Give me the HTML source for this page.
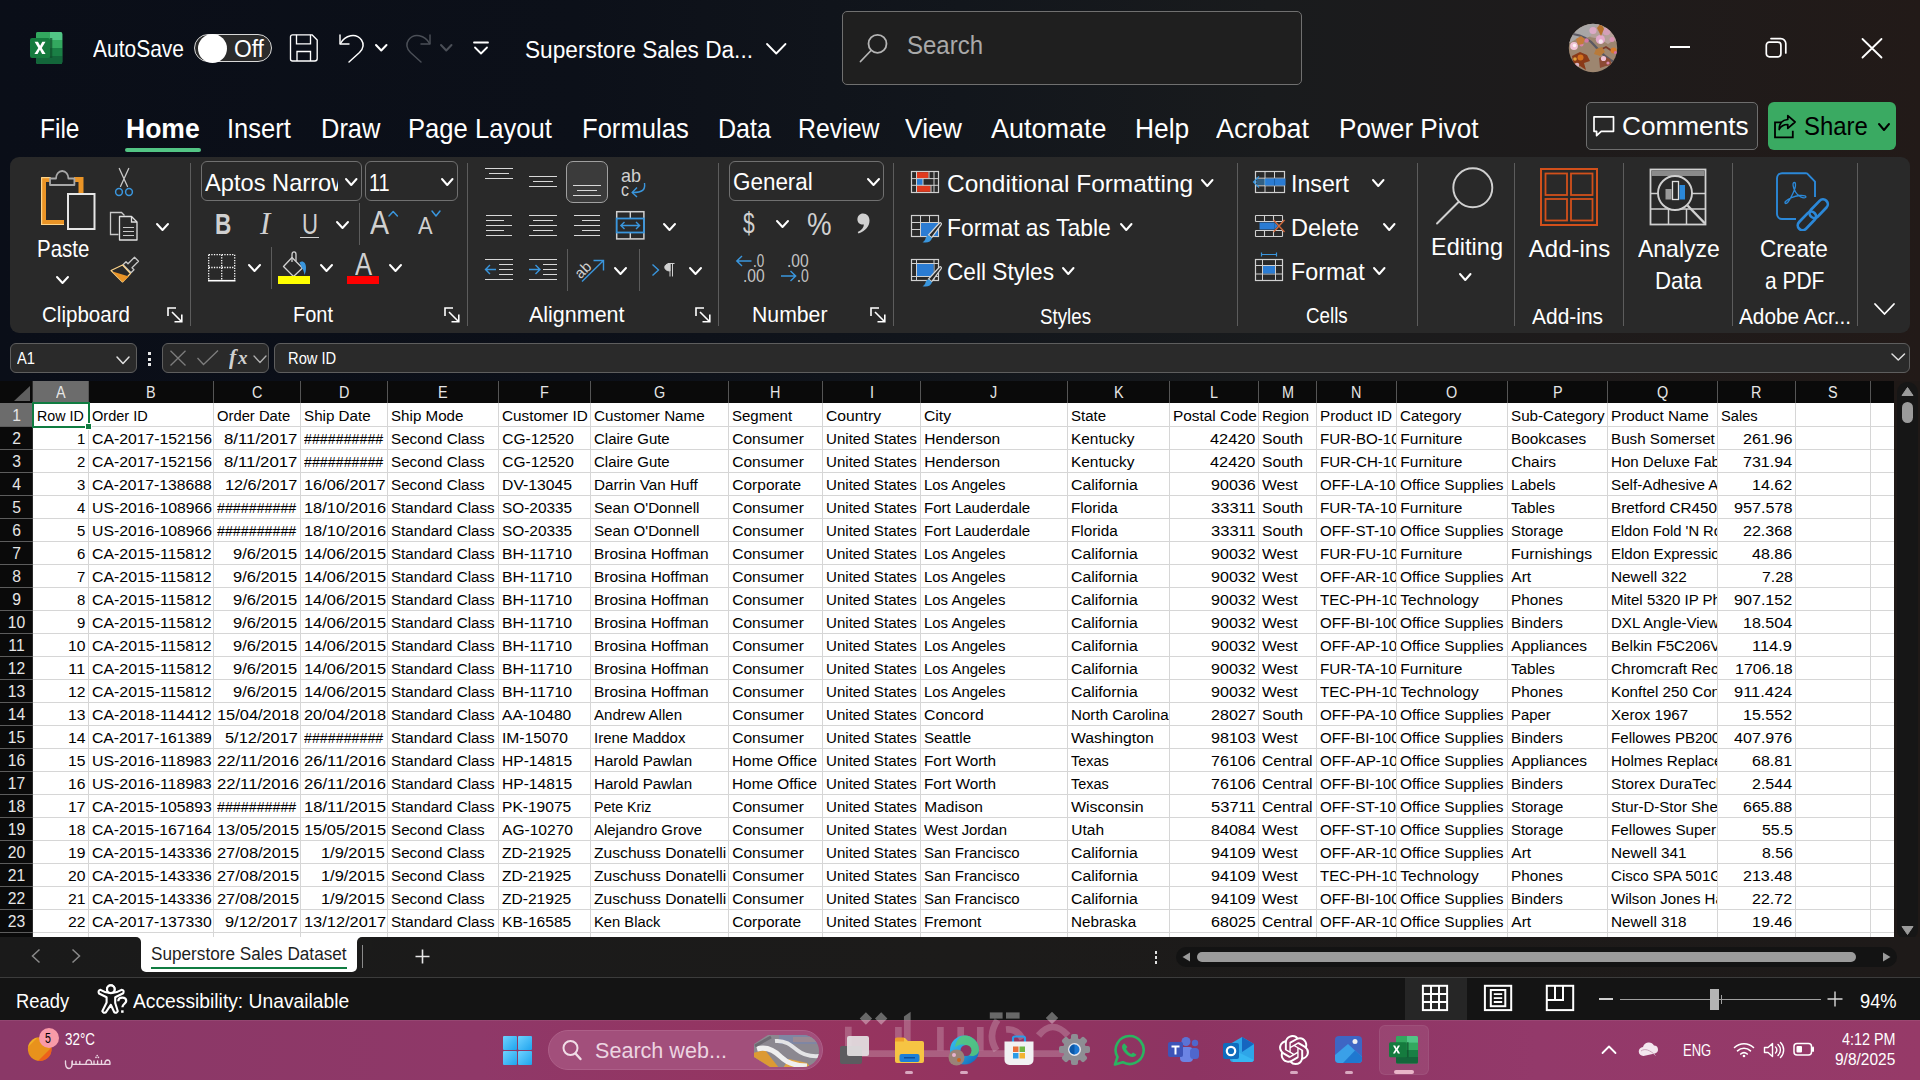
<!DOCTYPE html>
<html><head><meta charset="utf-8"><title>Excel</title><style>
html,body{margin:0;padding:0}
body{width:1920px;height:1080px;overflow:hidden;position:relative;background:#0b0f19;font-family:"Liberation Sans",sans-serif;}
.b{position:absolute;box-sizing:border-box}
.t{position:absolute;white-space:pre;transform-origin:0 0}
.c{position:absolute;overflow:hidden}
</style></head><body>
<div class="b" style="left:0px;top:0px;width:1920px;height:1020px;background:linear-gradient(90deg,#0a0e18 0%,#0c1019 30%,#12161c 50%,#191b1d 66%,#1e1b1b 82%,#221a18 100%);"></div>
<svg class="b" style="left:30px;top:32px;" width="33" height="33" viewBox="0 0 33 33"><defs><clipPath id="xb"><rect x="6" y="0" width="26.300" height="32" rx="2"/></clipPath></defs>
<g clip-path="url(#xb)"><rect x="6" y="0" width="27" height="32" fill="#2f9f5b"/>
<rect x="6" y="0" width="14" height="8" fill="#33a85f"/><rect x="20" y="0" width="13" height="8" fill="#52c586"/>
<rect x="6" y="8" width="27" height="8" fill="#33a85f"/><rect x="6" y="16" width="27" height="8" fill="#1a7f45"/>
<rect x="6" y="24" width="27" height="8" fill="#13663a"/><rect x="20" y="6" width="2.300" height="20" fill="#0f4d2b" opacity=".7"/></g>
<rect x="0" y="6" width="20" height="20" rx="2" fill="#157b3e"/>
<path d="M4.600 9.800h3.400l2.100 4 2.200-4h3.200l-3.700 6.100 3.800 6.100h-3.500l-2.200-4.200-2.300 4.200H4.400l3.900-6.100z" fill="#fff"/></svg>
<span class="t" style="left:93.00px;top:38px;font-size:23.2px;line-height:23.2px;color:#ffffff;transform:scaleX(0.9046);">AutoSave</span>
<div class="b" style="left:194px;top:34px;width:78px;height:28px;background:#2b2b2b;border:1.5px solid #d8d8d8;border-radius:14px;"></div>
<div class="b" style="left:198px;top:33.5px;width:29px;height:29px;background:#ffffff;border-radius:15px;"></div>
<span class="t" style="left:234.00px;top:38px;font-size:23px;line-height:23px;color:#ffffff;transform:scaleX(0.9896);">Off</span>
<svg class="b" style="left:289px;top:33px;" width="30" height="30" viewBox="0 0 30 30"><path d="M3.500 1.800h19.500l5.200 5.200v18.500a2.500 2.500 0 0 1-2.500 2.500H3.500a2 2 0 0 1-2-2V3.800a2 2 0 0 1 2-2z" fill="none" stroke="#fff" stroke-width="1.350" stroke-linejoin="round"/>
<path d="M7.500 1.800v9h14v-9" fill="none" stroke="#fff" stroke-width="1.350"/><path d="M8 28V18.500h13.500V28" fill="none" stroke="#fff" stroke-width="1.350"/></svg>
<svg class="b" style="left:336px;top:31px;" width="32" height="34" viewBox="0 0 32 34"><path d="M4 4v9h9" fill="none" stroke="#fff" stroke-width="1.450" stroke-linecap="round" stroke-linejoin="round"/>
<path d="M4.5 12.5C9 4 20 1.5 25.5 9c3 4.5 1.5 9-2 12.5L13 31" fill="none" stroke="#fff" stroke-width="1.450" stroke-linecap="round" stroke-linejoin="round"/></svg>
<svg class="b" style="left:373.75px;top:42.75px;" width="14.5" height="9.5" viewBox="0 0 14.5 9.5"><path d="M2 2 L7.25 7.5 L12.5 2" fill="none" stroke="#ffffff" stroke-width="2" stroke-linecap="round" stroke-linejoin="round"/></svg>
<svg class="b" style="left:402px;top:31px;" width="32" height="34" viewBox="0 0 32 34"><path d="M28 4v9h-9" fill="none" stroke="#4b4f57" stroke-width="1.450" stroke-linecap="round" stroke-linejoin="round"/>
<path d="M27.5 12.5C23 4 12 1.5 6.5 9c-3 4.5-1.5 9 2 12.5L19 31" fill="none" stroke="#4b4f57" stroke-width="1.450" stroke-linecap="round" stroke-linejoin="round"/></svg>
<svg class="b" style="left:439.45px;top:42.75px;" width="14.5" height="9.5" viewBox="0 0 14.5 9.5"><path d="M2 2 L7.25 7.5 L12.5 2" fill="none" stroke="#4b4f57" stroke-width="2" stroke-linecap="round" stroke-linejoin="round"/></svg>
<svg class="b" style="left:472px;top:40px;" width="18" height="16" viewBox="0 0 18 16"><path d="M2 2.5h14" stroke="#fff" stroke-width="1.8" stroke-linecap="round"/><path d="M3 7.5l6 6 6-6" fill="none" stroke="#fff" stroke-width="1.8" stroke-linecap="round" stroke-linejoin="round"/></svg>
<span class="t" style="left:524.50px;top:39px;font-size:23.5px;line-height:23.5px;color:#ffffff;transform:scaleX(0.9643);">Superstore Sales Da...</span>
<svg class="b" style="left:764.75px;top:41.95px;" width="22.5" height="13.5" viewBox="0 0 22.5 13.5"><path d="M2 2 L11.25 11.5 L20.5 2" fill="none" stroke="#ffffff" stroke-width="1.8" stroke-linecap="round" stroke-linejoin="round"/></svg>
<div class="b" style="left:842px;top:11px;width:460px;height:74px;background:#1f1f1f;border:1px solid #707070;border-radius:5px;"></div>
<svg class="b" style="left:856px;top:30px;" width="36" height="36" viewBox="0 0 36 36"><circle cx="21.5" cy="13.8" r="9" fill="none" stroke="#b4b4b4" stroke-width="1.8"/><path d="M15 20.5L4.5 31.5" stroke="#b4b4b4" stroke-width="1.8" stroke-linecap="round"/></svg>
<span class="t" style="left:907.00px;top:32px;font-size:26.5px;line-height:26.5px;color:#a9a9a9;transform:scaleX(0.9053);">Search</span>
<svg class="b" style="left:1568px;top:23px;" width="50" height="50" viewBox="0 0 50 50"><defs><clipPath id="av"><circle cx="25" cy="25" r="24.200"/></clipPath></defs>
<g clip-path="url(#av)"><rect width="50" height="50" fill="#9d8670"/>
<path d="M0 0h34l-2 6-6 6-8 3-8 0-10 6z" fill="#a8a6a6"/><path d="M22 14l10 2 8 5 6-4 4 4V10L40 0H30z" fill="#b5a09a"/>
<path d="M5 11q14 2 22 12t22 18" fill="none" stroke="#5b5862" stroke-width="2.200"/><path d="M30 28l8-4 6 4" fill="none" stroke="#7a3b2a" stroke-width="1.800"/>
<circle cx="32.400" cy="16.500" r="4.600" fill="#e3a9cb"/><circle cx="32.800" cy="18.500" r="2.200" fill="#f6e6ee"/>
<circle cx="25" cy="7.500" r="3.600" fill="#dcaac6"/><circle cx="38.500" cy="8.500" r="3.800" fill="#d3a0b8"/><circle cx="44" cy="16.500" r="2.500" fill="#d995b5"/>
<circle cx="6" cy="23" r="3.900" fill="#f1c3d5"/><circle cx="6.500" cy="22.500" r="1.800" fill="#fdf0f3"/>
<circle cx="18.500" cy="17.500" r="2.300" fill="#d07aa6"/><circle cx="13.500" cy="21.500" r="2" fill="#d982aa"/>
<path d="M8 16l5-3 4 3-2 5-5 1z" fill="#c57c3a"/><path d="M29 5l4-5 3 6-3 7z" fill="#b5702a"/>
<path d="M4 33l8-4 7 3 3 6-6 2 2 7-6-4-6 1z" fill="#8a3a18"/><circle cx="12.500" cy="34.500" r="3" fill="#d2701c"/><circle cx="7" cy="36" r="1.800" fill="#e2a13a"/>
<path d="M28 26l6-2 3 5-5 4-6-2z" fill="#b87a3a"/><circle cx="45.500" cy="27.500" r="3" fill="#d77a2a"/><circle cx="47.500" cy="29.500" r="1.600" fill="#d56fa5"/>
<path d="M31 35l5-2 6 3 2 6-6 1-6 2z" fill="#8c4a34"/><circle cx="35.500" cy="35.500" r="2.600" fill="#efc2d6"/><circle cx="40" cy="40" r="1.600" fill="#d98ab0"/>
<circle cx="9" cy="42" r="2.300" fill="#d8b4c0"/></g></svg>
<div class="b" style="left:1670px;top:46px;width:20px;height:2px;background:#fff;"></div>
<svg class="b" style="left:1763px;top:35px;" width="26" height="26" viewBox="0 0 26 26"><rect x="3.3" y="7.2" width="14.6" height="14.6" rx="3" fill="none" stroke="#fff" stroke-width="1.7"/>
<path d="M8 3.6h9.8a5 5 0 0 1 5 5V18" fill="none" stroke="#fff" stroke-width="1.7" stroke-linecap="round"/></svg>
<svg class="b" style="left:1860px;top:36px;" width="24" height="24" viewBox="0 0 24 24"><path d="M2.5 3L21.5 21.5M21.5 3L2.5 21.5" stroke="#fff" stroke-width="1.8" stroke-linecap="round"/></svg>
<span class="t" style="left:40.00px;top:115px;font-size:27.2px;line-height:27.2px;color:#ffffff;transform:scaleX(0.9014);">File</span>
<span class="t" style="left:227.00px;top:115px;font-size:27.2px;line-height:27.2px;color:#ffffff;transform:scaleX(0.9371);">Insert</span>
<span class="t" style="left:320.50px;top:115px;font-size:27.2px;line-height:27.2px;color:#ffffff;transform:scaleX(0.9364);">Draw</span>
<span class="t" style="left:408.00px;top:115px;font-size:27.2px;line-height:27.2px;color:#ffffff;transform:scaleX(0.9427);">Page Layout</span>
<span class="t" style="left:582.00px;top:115px;font-size:27.2px;line-height:27.2px;color:#ffffff;transform:scaleX(0.9416);">Formulas</span>
<span class="t" style="left:717.50px;top:115px;font-size:27.2px;line-height:27.2px;color:#ffffff;transform:scaleX(0.9222);">Data</span>
<span class="t" style="left:798.00px;top:115px;font-size:27.2px;line-height:27.2px;color:#ffffff;transform:scaleX(0.9130);">Review</span>
<span class="t" style="left:905.00px;top:115px;font-size:27.2px;line-height:27.2px;color:#ffffff;transform:scaleX(0.9738);">View</span>
<span class="t" style="left:990.75px;top:115px;font-size:27.2px;line-height:27.2px;color:#ffffff;transform:scaleX(0.9921);">Automate</span>
<span class="t" style="left:1135.00px;top:115px;font-size:27.2px;line-height:27.2px;color:#ffffff;transform:scaleX(0.9696);">Help</span>
<span class="t" style="left:1216.25px;top:115px;font-size:27.2px;line-height:27.2px;color:#ffffff;transform:scaleX(0.9922);">Acrobat</span>
<span class="t" style="left:1338.75px;top:115px;font-size:27.2px;line-height:27.2px;color:#ffffff;transform:scaleX(0.9613);">Power Pivot</span>
<span class="t" style="left:125.75px;top:115px;font-size:27.2px;line-height:27.2px;color:#ffffff;font-weight:700;transform:scaleX(0.9760);">Home</span>
<div class="b" style="left:125px;top:148px;width:76px;height:4px;background:#53c585;border-radius:2px;"></div>
<div class="b" style="left:1586px;top:102px;width:172px;height:48px;background:#282828;border:1px solid #6e6e6e;border-radius:5px;"></div>
<svg class="b" style="left:1591px;top:114px;" width="26" height="24" viewBox="0 0 26 24"><path d="M3 2.8h19.5v14.5H10.2L5.6 21.6v-4.3H3z" fill="none" stroke="#fff" stroke-width="1.7" stroke-linejoin="round"/></svg>
<span class="t" style="left:1622.00px;top:113px;font-size:26.2px;line-height:26.2px;color:#ffffff;">Comments</span>
<div class="b" style="left:1768px;top:102px;width:128px;height:48px;background:#3aaa62;border-radius:6px;"></div>
<svg class="b" style="left:1772px;top:113px;" width="26" height="27" viewBox="0 0 26 27"><path d="M9.5 9.3H3v15h17.8v-6.5" fill="none" stroke="#000" stroke-width="1.8"/>
<path d="M15.8 2.6l7.3 6.4-7.3 6.4v-3.9c-4.6 0-7 1.7-8.6 5 0-5.6 3-9.6 8.6-10z" fill="none" stroke="#000" stroke-width="1.7" stroke-linejoin="round"/></svg>
<span class="t" style="left:1804.10px;top:113px;font-size:26.2px;line-height:26.2px;color:#000;transform:scaleX(0.9127);">Share</span>
<svg class="b" style="left:1877.3px;top:121.6px;" width="14" height="10" viewBox="0 0 14 10"><path d="M2 2 L7.0 8 L12 2" fill="none" stroke="#000" stroke-width="2" stroke-linecap="round" stroke-linejoin="round"/></svg>
<div class="b" style="left:10px;top:157px;width:1900px;height:176px;background:#292929;border-radius:9px;"></div>
<div class="b" style="left:190px;top:163px;width:1px;height:163px;background:#5c5c5c;"></div>
<div class="b" style="left:467px;top:163px;width:1px;height:163px;background:#5c5c5c;"></div>
<div class="b" style="left:718px;top:163px;width:1px;height:163px;background:#5c5c5c;"></div>
<div class="b" style="left:893px;top:163px;width:1px;height:163px;background:#5c5c5c;"></div>
<div class="b" style="left:1237px;top:163px;width:1px;height:163px;background:#5c5c5c;"></div>
<div class="b" style="left:1417px;top:163px;width:1px;height:163px;background:#5c5c5c;"></div>
<div class="b" style="left:1514px;top:163px;width:1px;height:163px;background:#5c5c5c;"></div>
<div class="b" style="left:1623px;top:163px;width:1px;height:163px;background:#5c5c5c;"></div>
<div class="b" style="left:1732px;top:163px;width:1px;height:163px;background:#5c5c5c;"></div>
<div class="b" style="left:1857px;top:163px;width:1px;height:163px;background:#5c5c5c;"></div>
<svg class="b" style="left:40px;top:166px;" width="58" height="66" viewBox="0 0 58 66">
<path d="M10.5 13.5H3.5v43h20.5" fill="none" stroke="#ea9426" stroke-width="5"/>
<path d="M1.6 11.6h9" stroke="#ffd58a" stroke-width="1.2"/>
<path d="M34 13.5h7v14" fill="none" stroke="#ea9426" stroke-width="5"/>
<path d="M1.6 11.5v47h22.4" fill="none" stroke="#ffd58a" stroke-width="1.2"/>
<path d="M10 19V12.5h6c0-4 2.5-7.5 6.2-7.5s6.200 3.500 6.200 7.500h6V19z" fill="#292929" stroke="#a8a8a8" stroke-width="1.8" stroke-linejoin="round"/>
<rect x="28" y="28" width="26.5" height="35" fill="#292929" stroke="#e6e6e6" stroke-width="2"/></svg>
<span class="t" style="left:36.50px;top:237px;font-size:24px;line-height:24px;color:#ffffff;transform:scaleX(0.8522);">Paste</span>
<svg class="b" style="left:54.5px;top:274.5px;" width="15" height="10" viewBox="0 0 15 10"><path d="M2 2 L7.5 8 L13 2" fill="none" stroke="#ffffff" stroke-width="2" stroke-linecap="round" stroke-linejoin="round"/></svg>
<svg class="b" style="left:113px;top:166px;" width="22" height="32" viewBox="0 0 22 32"><path d="M6.3 2.500L14.500 20.500M15.700 2.500L7.500 20.500" stroke="#c8c8c8" stroke-width="1.3" stroke-linecap="round"/>
<circle cx="6" cy="26" r="3.4" fill="none" stroke="#3a96dd" stroke-width="1.5"/><circle cx="16" cy="26" r="3.4" fill="none" stroke="#3a96dd" stroke-width="1.5"/></svg>
<svg class="b" style="left:109px;top:211px;" width="31" height="31" viewBox="0 0 31 31"><path d="M9.500 23.500H1.500V1.500h11l3 3" fill="none" stroke="#c8c8c8" stroke-width="1.3"/>
<path d="M10.500 5.500h12l5.500 5.500v18H10.500z" fill="#292929" stroke="#e0e0e0" stroke-width="1.3" stroke-linejoin="round"/><path d="M22.500 5.500v5.500h5.500" fill="none" stroke="#e0e0e0" stroke-width="1.3"/>
<path d="M14 16.500h11M14 20.500h11M14 24.500h11" stroke="#c8c8c8" stroke-width="1.2"/></svg>
<svg class="b" style="left:154.5px;top:221.5px;" width="15" height="10" viewBox="0 0 15 10"><path d="M2 2 L7.5 8 L13 2" fill="none" stroke="#ffffff" stroke-width="2" stroke-linecap="round" stroke-linejoin="round"/></svg>
<svg class="b" style="left:109px;top:255px;" width="32" height="30" viewBox="0 0 32 30"><path d="M25.500 2.200l4 4-6.500 6.500 2 2-3 3-8-8 3-3 2 2z" fill="#292929" stroke="#c8c8c8" stroke-width="1.3" stroke-linejoin="round"/>
<path d="M13.500 10L2 15.500 13.500 27l8-8.500z" fill="#292929" stroke="#ffd58a" stroke-width="1.1" stroke-linejoin="round"/>
<path d="M3.500 16.500l16.500 5L13.500 27z" fill="#ea9426"/></svg>
<span class="t" style="left:41.60px;top:305px;font-size:21.3px;line-height:21.3px;color:#ffffff;transform:scaleX(0.9653);">Clipboard</span>
<svg class="b" style="left:167px;top:307px;" width="16" height="16" viewBox="0 0 16 16"><path d="M1 9V1h8" fill="none" stroke="#fff" stroke-width="1.6"/><path d="M5 5l9.5 9.5M14.8 7.5v7.3H7.5" fill="none" stroke="#fff" stroke-width="1.6"/></svg>
<div class="b" style="left:201px;top:161px;width:161px;height:40px;border:1px solid #707070;border-radius:6px;"></div>
<div class="c" style="left:203px;top:163px;width:135px;height:36px"><span class="t" style="left:1.60px;top:9px;font-size:23.2px;line-height:23.2px;color:#ffffff;transform:scaleX(1.0200);">Aptos Narrow</span></div>
<svg class="b" style="left:343.75px;top:176.6px;" width="14.5" height="10" viewBox="0 0 14.5 10"><path d="M2 2 L7.25 8 L12.5 2" fill="none" stroke="#ffffff" stroke-width="2" stroke-linecap="round" stroke-linejoin="round"/></svg>
<div class="b" style="left:365px;top:161px;width:93px;height:40px;border:1px solid #707070;border-radius:6px;"></div>
<span class="t" style="left:369.10px;top:172px;font-size:23.2px;line-height:23.2px;color:#ffffff;transform:scaleX(0.8596);">11</span>
<svg class="b" style="left:439.75px;top:176.6px;" width="14.5" height="10" viewBox="0 0 14.5 10"><path d="M2 2 L7.25 8 L12.5 2" fill="none" stroke="#ffffff" stroke-width="2" stroke-linecap="round" stroke-linejoin="round"/></svg>
<span class="t" style="left:214.80px;top:209px;font-size:29.7px;line-height:29.7px;color:#d0d0d0;font-weight:700;transform:scaleX(0.7601);">B</span>
<span class="t" style="left:260.12px;top:208px;font-size:31px;line-height:31px;color:#d0d0d0;font-style:italic;font-family:'Liberation Serif',serif;">I</span>
<span class="t" style="left:301.60px;top:209px;font-size:29.7px;line-height:29.7px;color:#d0d0d0;transform:scaleX(0.7462);">U</span>
<div class="b" style="left:300px;top:236.6px;width:19px;height:1.6px;background:#d0d0d0;"></div>
<svg class="b" style="left:334.7px;top:219.5px;" width="15" height="10" viewBox="0 0 15 10"><path d="M2 2 L7.5 8 L13 2" fill="none" stroke="#ffffff" stroke-width="2" stroke-linecap="round" stroke-linejoin="round"/></svg>
<div class="b" style="left:358.5px;top:203px;width:1px;height:42px;background:#5c5c5c;"></div>
<span class="t" style="left:370.00px;top:206px;font-size:33px;line-height:33px;color:#d0d0d0;transform:scaleX(0.8632);">A</span>
<svg class="b" style="left:386.5px;top:208.5px;" width="12" height="9" viewBox="0 0 12 9"><path d="M2 7L6.200 2.500 10.400 7" fill="none" stroke="#3a96dd" stroke-width="1.500" stroke-linecap="round" stroke-linejoin="round"/></svg>
<span class="t" style="left:418.20px;top:214px;font-size:24.5px;line-height:24.5px;color:#d0d0d0;transform:scaleX(0.8934);">A</span>
<svg class="b" style="left:430.4px;top:209.0px;" width="12" height="9" viewBox="0 0 12 9"><path d="M2 2 L6.0 7 L10 2" fill="none" stroke="#3a96dd" stroke-width="1.5" stroke-linecap="round" stroke-linejoin="round"/></svg>
<svg class="b" style="left:207px;top:253px;" width="30" height="30" viewBox="0 0 30 30"><path d="M1.7 1.7h26v26" fill="none" stroke="#fff" stroke-width="1.3" stroke-dasharray="1.3 1.3"/><path d="M1.7 1.7v26" stroke="#fff" stroke-width="1.3" stroke-dasharray="1.3 1.3"/>
<path d="M14.700 1.700v26M1.700 14.500h26" stroke="#fff" stroke-width="1.3" stroke-dasharray="1.3 1.3"/><path d="M1 27.700h27.500" stroke="#fff" stroke-width="1.6"/></svg>
<svg class="b" style="left:246.5px;top:263.4px;" width="15" height="10" viewBox="0 0 15 10"><path d="M2 2 L7.5 8 L13 2" fill="none" stroke="#ffffff" stroke-width="2" stroke-linecap="round" stroke-linejoin="round"/></svg>
<div class="b" style="left:270.5px;top:247px;width:1px;height:42px;background:#5c5c5c;"></div>
<svg class="b" style="left:281px;top:250px;" width="28" height="27" viewBox="0 0 28 27"><path d="M11 7.500l10.500 10.500-9 8.500L2.500 16.500z" fill="none" stroke="#d0d0d0" stroke-width="1.3" stroke-linejoin="round"/>
<path d="M11 12V4.500c0-3.500 4-3.500 4 0V11" fill="none" stroke="#d0d0d0" stroke-width="1.300"/>
<path d="M18.500 12.500c3-2.500 6.500 0 6.500 5 0 3-.5 5-1.500 7.500-.5-3-1-5-2.500-7z" fill="#3a96dd"/></svg>
<div class="b" style="left:278px;top:276.2px;width:32px;height:7.6px;background:#ffff00;"></div>
<svg class="b" style="left:318.5px;top:263.4px;" width="15" height="10" viewBox="0 0 15 10"><path d="M2 2 L7.5 8 L13 2" fill="none" stroke="#ffffff" stroke-width="2" stroke-linecap="round" stroke-linejoin="round"/></svg>
<span class="t" style="left:354.50px;top:250px;font-size:30.7px;line-height:30.7px;color:#d0d0d0;transform:scaleX(0.8351);">A</span>
<div class="b" style="left:347px;top:276.2px;width:32.2px;height:7.6px;background:#ff0000;"></div>
<svg class="b" style="left:387.7px;top:263.4px;" width="15" height="10" viewBox="0 0 15 10"><path d="M2 2 L7.5 8 L13 2" fill="none" stroke="#ffffff" stroke-width="2" stroke-linecap="round" stroke-linejoin="round"/></svg>
<span class="t" style="left:293.25px;top:305px;font-size:21.3px;line-height:21.3px;color:#ffffff;transform:scaleX(0.9373);">Font</span>
<svg class="b" style="left:444px;top:307px;" width="16" height="16" viewBox="0 0 16 16"><path d="M1 9V1h8" fill="none" stroke="#fff" stroke-width="1.6"/><path d="M5 5l9.5 9.5M14.8 7.5v7.3H7.5" fill="none" stroke="#fff" stroke-width="1.6"/></svg>
<div class="b" style="left:485px;top:167.60000000000002px;width:28px;height:1.4px;background:#d8d8d8;"></div><div class="b" style="left:489px;top:172.60000000000002px;width:20px;height:1.4px;background:#d8d8d8;"></div><div class="b" style="left:485px;top:177.70000000000002px;width:28px;height:1.4px;background:#d8d8d8;"></div>
<div class="b" style="left:529px;top:175.60000000000002px;width:28px;height:1.4px;background:#d8d8d8;"></div><div class="b" style="left:533px;top:180.70000000000002px;width:20px;height:1.4px;background:#d8d8d8;"></div><div class="b" style="left:529px;top:185.70000000000002px;width:28px;height:1.4px;background:#d8d8d8;"></div>
<div class="b" style="left:566px;top:161px;width:42px;height:42px;background:#3b3b3b;border:1px solid #a0a0a0;border-radius:7px;"></div>
<div class="b" style="left:573px;top:184.8px;width:28px;height:1.4px;background:#d8d8d8;"></div><div class="b" style="left:577px;top:189.8px;width:20px;height:1.4px;background:#d8d8d8;"></div><div class="b" style="left:573px;top:194.70000000000002px;width:28px;height:1.4px;background:#d8d8d8;"></div>
<span class="t" style="left:621.00px;top:166px;font-size:19px;line-height:19px;color:#d0d0d0;transform:scaleX(0.9466);">ab</span>
<span class="t" style="left:621.00px;top:180px;font-size:19px;line-height:19px;color:#d0d0d0;transform:scaleX(0.8421);">c</span>
<svg class="b" style="left:630px;top:182px;" width="18" height="16" viewBox="0 0 18 16"><path d="M14.500 1c1 7-2 9.500-12 9.500" fill="none" stroke="#3a96dd" stroke-width="1.4"/><path d="M7 5.500L2.200 10.500 7 15" fill="none" stroke="#3a96dd" stroke-width="1.4"/></svg>
<div class="b" style="left:486px;top:214.70000000000002px;width:26px;height:1.4px;background:#d8d8d8;"></div><div class="b" style="left:486px;top:219.70000000000002px;width:18px;height:1.4px;background:#d8d8d8;"></div><div class="b" style="left:486px;top:224.8px;width:26px;height:1.4px;background:#d8d8d8;"></div><div class="b" style="left:486px;top:229.8px;width:18px;height:1.4px;background:#d8d8d8;"></div><div class="b" style="left:486px;top:234.9px;width:26px;height:1.4px;background:#d8d8d8;"></div>
<div class="b" style="left:529px;top:214.70000000000002px;width:28px;height:1.4px;background:#d8d8d8;"></div><div class="b" style="left:533px;top:219.70000000000002px;width:20px;height:1.4px;background:#d8d8d8;"></div><div class="b" style="left:529px;top:224.8px;width:28px;height:1.4px;background:#d8d8d8;"></div><div class="b" style="left:533px;top:229.8px;width:20px;height:1.4px;background:#d8d8d8;"></div><div class="b" style="left:529px;top:234.9px;width:28px;height:1.4px;background:#d8d8d8;"></div>
<div class="b" style="left:574px;top:214.70000000000002px;width:26px;height:1.4px;background:#d8d8d8;"></div><div class="b" style="left:582px;top:219.70000000000002px;width:18px;height:1.4px;background:#d8d8d8;"></div><div class="b" style="left:574px;top:224.8px;width:26px;height:1.4px;background:#d8d8d8;"></div><div class="b" style="left:582px;top:229.8px;width:18px;height:1.4px;background:#d8d8d8;"></div><div class="b" style="left:574px;top:234.9px;width:26px;height:1.4px;background:#d8d8d8;"></div>
<svg class="b" style="left:615px;top:210px;" width="31" height="31" viewBox="0 0 31 31"><rect x="1.700" y="1.700" width="27.200" height="27.200" fill="none" stroke="#d0d0d0" stroke-width="1.5"/><path d="M15.300 1.700v6.500M15.300 22.500v6.500" stroke="#d0d0d0" stroke-width="1.400"/>
<rect x="1.700" y="8.500" width="27.200" height="14" fill="#292929" stroke="#3a96dd" stroke-width="1.800"/>
<path d="M6 15.500h18.500M9.500 12l-3.600 3.500 3.600 3.500M21 12l3.600 3.500-3.600 3.500" fill="none" stroke="#3a96dd" stroke-width="1.400"/></svg>
<svg class="b" style="left:661.5px;top:221.6px;" width="15" height="10" viewBox="0 0 15 10"><path d="M2 2 L7.5 8 L13 2" fill="none" stroke="#ffffff" stroke-width="2" stroke-linecap="round" stroke-linejoin="round"/></svg>
<div class="b" style="left:485px;top:258.90000000000003px;width:28px;height:1.4px;background:#d8d8d8;"></div><div class="b" style="left:499px;top:263.90000000000003px;width:14px;height:1.4px;background:#d8d8d8;"></div><div class="b" style="left:499px;top:268.90000000000003px;width:14px;height:1.4px;background:#d8d8d8;"></div><div class="b" style="left:499px;top:273.90000000000003px;width:14px;height:1.4px;background:#d8d8d8;"></div><div class="b" style="left:485px;top:278.8px;width:28px;height:1.4px;background:#d8d8d8;"></div>
<svg class="b" style="left:484px;top:263px;" width="14" height="13" viewBox="0 0 14 13"><path d="M12 6.500H2M6 2L1.500 6.500 6 11" fill="none" stroke="#3a96dd" stroke-width="1.400"/></svg>
<div class="b" style="left:529px;top:258.90000000000003px;width:28px;height:1.4px;background:#d8d8d8;"></div><div class="b" style="left:543px;top:263.90000000000003px;width:14px;height:1.4px;background:#d8d8d8;"></div><div class="b" style="left:543px;top:268.90000000000003px;width:14px;height:1.4px;background:#d8d8d8;"></div><div class="b" style="left:543px;top:273.90000000000003px;width:14px;height:1.4px;background:#d8d8d8;"></div><div class="b" style="left:529px;top:278.8px;width:28px;height:1.4px;background:#d8d8d8;"></div>
<svg class="b" style="left:528px;top:263px;" width="14" height="13" viewBox="0 0 14 13"><path d="M1 6.500h10.500M7.500 2l4.500 4.500L7.500 11" fill="none" stroke="#3a96dd" stroke-width="1.400"/></svg>
<div class="b" style="left:566.6px;top:249px;width:1px;height:42px;background:#5c5c5c;"></div>
<svg class="b" style="left:574px;top:256px;" width="33" height="28" viewBox="0 0 33 28"><text x="0" y="0" transform="translate(6.500 23.500) rotate(-45)" font-family="Liberation Sans" font-size="15" fill="#d0d0d0">ab</text>
<path d="M8 25.500L29 5M19.500 4.500H29.500V14.500" fill="none" stroke="#3a96dd" stroke-width="1.400"/></svg>
<svg class="b" style="left:612.5px;top:265.7px;" width="15" height="10" viewBox="0 0 15 10"><path d="M2 2 L7.5 8 L13 2" fill="none" stroke="#ffffff" stroke-width="2" stroke-linecap="round" stroke-linejoin="round"/></svg>
<div class="b" style="left:639.4px;top:249px;width:1px;height:42px;background:#5c5c5c;"></div>
<svg class="b" style="left:651px;top:262px;" width="25" height="16" viewBox="0 0 25 16"><path d="M1.500 2.500l6 5.500-6 5.500" fill="none" stroke="#3a96dd" stroke-width="1.400"/>
<path d="M17 1.500h6.500M19 1.500v13M21.500 1.500v13M19 1.500c-7 0-7 7.500 0 7.500z" fill="#d0d0d0" stroke="#d0d0d0" stroke-width="1"/></svg>
<svg class="b" style="left:687.5px;top:265.7px;" width="15" height="10" viewBox="0 0 15 10"><path d="M2 2 L7.5 8 L13 2" fill="none" stroke="#ffffff" stroke-width="2" stroke-linecap="round" stroke-linejoin="round"/></svg>
<span class="t" style="left:528.60px;top:305px;font-size:21.3px;line-height:21.3px;color:#ffffff;transform:scaleX(1.0082);">Alignment</span>
<svg class="b" style="left:695px;top:307px;" width="16" height="16" viewBox="0 0 16 16"><path d="M1 9V1h8" fill="none" stroke="#fff" stroke-width="1.6"/><path d="M5 5l9.5 9.5M14.8 7.5v7.3H7.5" fill="none" stroke="#fff" stroke-width="1.6"/></svg>
<div class="b" style="left:729px;top:161px;width:155px;height:40px;border:1px solid #707070;border-radius:6px;"></div>
<span class="t" style="left:733.00px;top:171px;font-size:23.5px;line-height:23.5px;color:#ffffff;transform:scaleX(0.9544);">General</span>
<svg class="b" style="left:865.5px;top:176.6px;" width="15" height="10" viewBox="0 0 15 10"><path d="M2 2 L7.5 8 L13 2" fill="none" stroke="#ffffff" stroke-width="2" stroke-linecap="round" stroke-linejoin="round"/></svg>
<span class="t" style="left:743.30px;top:208px;font-size:30px;line-height:30px;color:#d0d0d0;transform:scaleX(0.7014);">$</span>
<svg class="b" style="left:774.5px;top:219.3px;" width="15" height="10" viewBox="0 0 15 10"><path d="M2 2 L7.5 8 L13 2" fill="none" stroke="#ffffff" stroke-width="2" stroke-linecap="round" stroke-linejoin="round"/></svg>
<span class="t" style="left:806.70px;top:209px;font-size:31px;line-height:31px;color:#d0d0d0;transform:scaleX(0.8926);">%</span>
<svg class="b" style="left:854px;top:211px;" width="18" height="26" viewBox="0 0 18 26"><path d="M9 2.500c4 0 6.500 3 6.500 7 0 6-4 10.500-11 13l-.8-1.500c4-2 6-4.500 6.200-7.500-3.500.5-6.500-1.500-6.500-5 0-3.500 2.500-6 5.600-6z" fill="#d0d0d0"/></svg>
<span class="t" style="left:753.00px;top:252px;font-size:18px;line-height:18px;color:#c4c4c4;transform:scaleX(0.7461);">.0</span><span class="t" style="left:742.50px;top:267px;font-size:18px;line-height:18px;color:#c4c4c4;transform:scaleX(0.8673);">.00</span><svg class="b" style="left:735.3px;top:253.5px;" width="18" height="14" viewBox="0 0 18 14"><path d="M16.500 7H2M7 2L1.800 7 7 12" fill="none" stroke="#3a96dd" stroke-width="1.400"/></svg>
<span class="t" style="left:786.70px;top:252px;font-size:18px;line-height:18px;color:#c4c4c4;transform:scaleX(0.8673);">.00</span><span class="t" style="left:796.70px;top:267px;font-size:18px;line-height:18px;color:#c4c4c4;transform:scaleX(0.7794);">.0</span><svg class="b" style="left:779.5px;top:268.5px;" width="18" height="14" viewBox="0 0 18 14"><path d="M1 7h14.500M10.500 2l5.200 5-5.200 5" fill="none" stroke="#3a96dd" stroke-width="1.400"/></svg>
<span class="t" style="left:752.00px;top:305px;font-size:21.3px;line-height:21.3px;color:#ffffff;transform:scaleX(0.9965);">Number</span>
<svg class="b" style="left:869.7px;top:307px;" width="16" height="16" viewBox="0 0 16 16"><path d="M1 9V1h8" fill="none" stroke="#fff" stroke-width="1.6"/><path d="M5 5l9.5 9.5M14.8 7.5v7.3H7.5" fill="none" stroke="#fff" stroke-width="1.6"/></svg>
<svg class="b" style="left:910px;top:170px;" width="30" height="24" viewBox="0 0 30 24"><rect x="1.500" y="1.500" width="27" height="21" fill="#292929" stroke="#d0d0d0" stroke-width="1.200"/>
<rect x="6.500" y="2.200" width="12" height="6.300" fill="#e03a1e"/><rect x="6.500" y="8.800" width="6.500" height="6.300" fill="#2b7cd3"/><rect x="6.500" y="15.500" width="14" height="6.300" fill="#e03a1e"/>
<path d="M6.500 1.500v21M13 8.500v7M19 1.500v7M21 15v7.500M24 1.500v21M1.500 8.600h27M1.500 15.300h27" stroke="#d0d0d0" stroke-width="1"/></svg>
<span class="t" style="left:946.50px;top:172px;font-size:24px;line-height:24px;color:#ffffff;transform:scaleX(1.0192);">Conditional Formatting</span>
<svg class="b" style="left:1199.95px;top:178.0px;" width="14.5" height="10" viewBox="0 0 14.5 10"><path d="M2 2 L7.25 8 L12.5 2" fill="none" stroke="#ffffff" stroke-width="2" stroke-linecap="round" stroke-linejoin="round"/></svg>
<svg class="b" style="left:910px;top:214px;" width="34" height="30" viewBox="0 0 34 30"><rect x="1.500" y="1.500" width="27" height="21" fill="none" stroke="#d0d0d0" stroke-width="1.200"/>
<path d="M1.500 8.500h27M1.500 15.500h27M10.500 1.500v21M19.500 1.500v21" stroke="#d0d0d0" stroke-width="1"/>
<rect x="11" y="9" width="17" height="13" fill="#2b7cd3"/><path d="M29.5 9c1.200-.8 2.500.5 1.700 1.700l-9.500 13-3.200-2.700z" fill="#292929" stroke="#d8d8d8" stroke-width="1.200"/>
<path d="M19.0 21.5l3 2.700c-1 3.500-4.500 5-9.500 4 2-1 2.500-2 3-3.700.5-2 1.800-3 3.500-3z" fill="#3a96dd"/></svg>
<span class="t" style="left:947.40px;top:216px;font-size:24px;line-height:24px;color:#ffffff;transform:scaleX(0.9538);">Format as Table</span>
<svg class="b" style="left:1119.05px;top:221.6px;" width="14.5" height="10" viewBox="0 0 14.5 10"><path d="M2 2 L7.25 8 L12.5 2" fill="none" stroke="#ffffff" stroke-width="2" stroke-linecap="round" stroke-linejoin="round"/></svg>
<svg class="b" style="left:910px;top:258px;" width="34" height="30" viewBox="0 0 34 30"><rect x="1.500" y="1.500" width="27" height="21" fill="none" stroke="#d0d0d0" stroke-width="1.200"/>
<path d="M1.500 5.500h27M1.500 18.500h27M6.500 1.500v21M24 1.500v21" stroke="#d0d0d0" stroke-width="1"/>
<rect x="7" y="6" width="16.500" height="12" fill="#2b7cd3"/><path d="M29.5 9c1.200-.8 2.500.5 1.700 1.700l-9.500 13-3.200-2.700z" fill="#292929" stroke="#d8d8d8" stroke-width="1.200"/>
<path d="M19.0 21.5l3 2.700c-1 3.500-4.500 5-9.500 4 2-1 2.500-2 3-3.700.5-2 1.800-3 3.500-3z" fill="#3a96dd"/></svg>
<span class="t" style="left:946.50px;top:260px;font-size:24px;line-height:24px;color:#ffffff;transform:scaleX(0.9438);">Cell Styles</span>
<svg class="b" style="left:1060.95px;top:265.7px;" width="14.5" height="10" viewBox="0 0 14.5 10"><path d="M2 2 L7.25 8 L12.5 2" fill="none" stroke="#ffffff" stroke-width="2" stroke-linecap="round" stroke-linejoin="round"/></svg>
<span class="t" style="left:1039.50px;top:307px;font-size:21.3px;line-height:21.3px;color:#ffffff;transform:scaleX(0.8793);">Styles</span>
<svg class="b" style="left:1252px;top:170px;" width="34" height="24" viewBox="0 0 34 24"><rect x="3.500" y="1.500" width="29" height="21" fill="none" stroke="#d0d0d0" stroke-width="1.200"/>
<path d="M3.500 8.200h29M3.500 15.800h29M13 1.500v21M22.500 1.500v21" stroke="#d0d0d0" stroke-width="1"/>
<rect x="13" y="8.500" width="20.500" height="7" fill="#2b7cd3"/><path d="M22.500 8.500v7" stroke="#1b5fa8" stroke-width="1"/>
<path d="M14 12H2M7 6.500L1.500 12 7 17.500M14 10H5M14 14H5" fill="none" stroke="#3a96dd" stroke-width="1.200"/></svg>
<span class="t" style="left:1291.20px;top:172px;font-size:24px;line-height:24px;color:#ffffff;transform:scaleX(0.9663);">Insert</span>
<svg class="b" style="left:1370.75px;top:177.6px;" width="14.5" height="10" viewBox="0 0 14.5 10"><path d="M2 2 L7.25 8 L12.5 2" fill="none" stroke="#ffffff" stroke-width="2" stroke-linecap="round" stroke-linejoin="round"/></svg>
<svg class="b" style="left:1253px;top:214px;" width="34" height="24" viewBox="0 0 34 24"><path d="M2.500 1.500h27M2.500 22.500h27M2.500 1.500v6M2.500 16.500v6M11.500 1.500v6M11.500 16.500v6M20.500 1.500v6M20.500 16.500v6M29.500 1.500v6M29.500 16.500v6M2.500 7.500h27M2.500 16.500h27" stroke="#d0d0d0" stroke-width="1.100" fill="none"/>
<rect x="6.500" y="8.500" width="15" height="7" fill="#2b7cd3"/><path d="M21.500 8.500l3.500 3.500-3.500 3.500z" fill="#2b7cd3"/>
<path d="M20.500 6L31.500 18M31.500 6L20.500 18" stroke="#d2693c" stroke-width="1.400"/></svg>
<span class="t" style="left:1291.20px;top:216px;font-size:24px;line-height:24px;color:#ffffff;transform:scaleX(0.9801);">Delete</span>
<svg class="b" style="left:1381.95px;top:221.5px;" width="14.5" height="10" viewBox="0 0 14.5 10"><path d="M2 2 L7.25 8 L12.5 2" fill="none" stroke="#ffffff" stroke-width="2" stroke-linecap="round" stroke-linejoin="round"/></svg>
<svg class="b" style="left:1253px;top:252px;" width="32" height="30" viewBox="0 0 32 30"><path d="M8.500 2.500h15M8.500 .5v4M23.500 .5v4" stroke="#3a96dd" stroke-width="1.200"/>
<rect x="2.500" y="7.500" width="27" height="21" fill="none" stroke="#d0d0d0" stroke-width="1.200"/>
<path d="M2.500 13.500h27M2.500 22h27M9.500 7.500v21M22.500 7.500v21" stroke="#d0d0d0" stroke-width="1"/>
<rect x="10" y="14" width="12" height="7.500" fill="#2b7cd3"/></svg>
<span class="t" style="left:1291.20px;top:260px;font-size:24px;line-height:24px;color:#ffffff;transform:scaleX(0.9710);">Format</span>
<svg class="b" style="left:1371.95px;top:265.7px;" width="14.5" height="10" viewBox="0 0 14.5 10"><path d="M2 2 L7.25 8 L12.5 2" fill="none" stroke="#ffffff" stroke-width="2" stroke-linecap="round" stroke-linejoin="round"/></svg>
<span class="t" style="left:1305.80px;top:306px;font-size:21.3px;line-height:21.3px;color:#ffffff;transform:scaleX(0.8807);">Cells</span>
<svg class="b" style="left:1430px;top:164px;" width="70" height="66" viewBox="0 0 70 66"><circle cx="42.800" cy="23.800" r="19.500" fill="none" stroke="#d0d0d0" stroke-width="1.900"/><path d="M28.500 38L7 59.500" stroke="#d0d0d0" stroke-width="1.900" stroke-linecap="round"/></svg>
<span class="t" style="left:1430.50px;top:235px;font-size:24px;line-height:24px;color:#ffffff;transform:scaleX(0.9810);">Editing</span>
<svg class="b" style="left:1457.75px;top:272.3px;" width="14.5" height="10" viewBox="0 0 14.5 10"><path d="M2 2 L7.25 8 L12.5 2" fill="none" stroke="#ffffff" stroke-width="2" stroke-linecap="round" stroke-linejoin="round"/></svg>
<svg class="b" style="left:1539px;top:167px;" width="60" height="60" viewBox="0 0 60 60"><rect x="2" y="2" width="56" height="56" fill="none" stroke="#d2501b" stroke-width="2"/>
<rect x="6.500" y="6.500" width="21.500" height="21.500" fill="none" stroke="#d2501b" stroke-width="1.800"/><rect x="32" y="6.500" width="21.500" height="21.500" fill="none" stroke="#d2501b" stroke-width="1.800"/>
<rect x="6.500" y="32" width="21.500" height="21.500" fill="none" stroke="#d2501b" stroke-width="1.800"/><rect x="32" y="32" width="21.500" height="21.500" fill="none" stroke="#d2501b" stroke-width="1.800"/></svg>
<span class="t" style="left:1528.80px;top:237px;font-size:24px;line-height:24px;color:#ffffff;">Add-ins</span>
<span class="t" style="left:1532.40px;top:307px;font-size:21.3px;line-height:21.3px;color:#ffffff;transform:scaleX(0.9844);">Add-ins</span>
<svg class="b" style="left:1649px;top:168px;" width="58" height="58" viewBox="0 0 58 58"><rect x="1.500" y="1.500" width="55" height="55" fill="none" stroke="#d0d0d0" stroke-width="1.800"/>
<rect x="2.500" y="2.500" width="53" height="5.500" fill="#8a8a8a"/>
<path d="M1.500 25.500h55M1.500 41h55M19.500 41v15.500M37.500 41v15.500" stroke="#d0d0d0" stroke-width="1.500"/>
<circle cx="26" cy="25" r="17" fill="#292929" stroke="#d0d0d0" stroke-width="1.900"/>
<rect x="16.500" y="21" width="6" height="10.500" fill="#9a9a9a"/><rect x="23.500" y="13.500" width="6" height="18" fill="#292929" stroke="#e0e0e0" stroke-width="1.300"/><rect x="30.500" y="17" width="5.500" height="14.500" fill="#2b88d8"/>
<path d="M38.500 37.500L56 55.500" stroke="#d0d0d0" stroke-width="2.500"/></svg>
<span class="t" style="left:1637.50px;top:237px;font-size:24px;line-height:24px;color:#ffffff;transform:scaleX(0.9579);">Analyze</span>
<span class="t" style="left:1655.20px;top:269px;font-size:24px;line-height:24px;color:#ffffff;transform:scaleX(0.9268);">Data</span>
<svg class="b" style="left:1775px;top:171px;" width="58" height="60" viewBox="0 0 58 60"><path d="M31.800 2.200H7a5 5 0 0 0-5 5V43a5 5 0 0 0 5 5h14M31.800 2.200L40 10.700V26" fill="none" stroke="#2b88d8" stroke-width="1.900" stroke-linejoin="round"/>
<path d="M19.500 11.500c-2.500 0-1.500 5 1 9.500 2.500 4.500 8 6.500 10 5.500 1.500-1-1-2.500-6-2-5 .5-11.500 3-14 6-1.500 2 .5 3 2.500.5 3-4 7.500-13 7.500-17 0-1.500-.5-2.500-1-2.500z" fill="none" stroke="#2b88d8" stroke-width="1.300"/>
<g transform="translate(37.800 43.800) rotate(-46)" fill="none" stroke="#2b88d8" stroke-width="2.700"><rect x="-19.500" y="-4.800" width="22" height="9.600" rx="4.800"/><rect x="-2.500" y="-4.800" width="22" height="9.600" rx="4.800"/></g></svg>
<span class="t" style="left:1760.30px;top:237px;font-size:24px;line-height:24px;color:#ffffff;transform:scaleX(0.9427);">Create</span>
<span class="t" style="left:1764.50px;top:269px;font-size:24px;line-height:24px;color:#ffffff;transform:scaleX(0.8733);">a PDF</span>
<span class="t" style="left:1738.50px;top:307px;font-size:21.3px;line-height:21.3px;color:#ffffff;transform:scaleX(0.9759);">Adobe Acr...</span>
<svg class="b" style="left:1872.5px;top:301.7px;" width="23" height="14" viewBox="0 0 23 14"><path d="M2 2 L11.5 12 L21 2" fill="none" stroke="#ffffff" stroke-width="1.8" stroke-linecap="round" stroke-linejoin="round"/></svg>
<div class="b" style="left:10px;top:343px;width:127px;height:30px;background:#2a2a2a;border:1px solid #5e5e5e;border-radius:6px;"></div>
<span class="t" style="left:17.00px;top:350px;font-size:16.5px;line-height:16.5px;color:#ffffff;transform:scaleX(0.8920);">A1</span>
<svg class="b" style="left:115.3px;top:354.75px;" width="16" height="10.5" viewBox="0 0 16 10.5"><path d="M2 2 L8.0 8.5 L14 2" fill="none" stroke="#e0e0e0" stroke-width="1.5" stroke-linecap="round" stroke-linejoin="round"/></svg>
<div class="b" style="left:148px;top:352px;width:3px;height:3px;background:#e8e8e8;"></div>
<div class="b" style="left:148px;top:357.5px;width:3px;height:3px;background:#e8e8e8;"></div>
<div class="b" style="left:148px;top:363px;width:3px;height:3px;background:#e8e8e8;"></div>
<div class="b" style="left:162px;top:343px;width:107px;height:30px;background:#2a2a2a;border:1px solid #5e5e5e;border-radius:6px;"></div>
<svg class="b" style="left:169px;top:349px;" width="18" height="18" viewBox="0 0 18 18"><path d="M1.500 1.800L16.500 16.500M16.500 1.800L1.500 16.500" stroke="#7d7d7d" stroke-width="1.300"/></svg>
<svg class="b" style="left:196px;top:349px;" width="24" height="17" viewBox="0 0 24 17"><path d="M1.500 9L7.500 15.500 22 1.500" fill="none" stroke="#7d7d7d" stroke-width="1.300"/></svg>
<span class="t" style="left:229.00px;top:346px;font-size:22px;line-height:22px;color:#d0d0d0;font-weight:700;font-style:italic;font-family:'Liberation Serif',serif;transform:scaleX(0.9810);">f</span>
<span class="t" style="left:237.75px;top:348px;font-size:19px;line-height:19px;color:#d0d0d0;font-weight:700;font-style:italic;font-family:'Liberation Serif',serif;transform:scaleX(1.0054);">x</span>
<svg class="b" style="left:252.0px;top:353.95px;" width="16" height="10.5" viewBox="0 0 16 10.5"><path d="M2 2 L8.0 8.5 L14 2" fill="none" stroke="#b0b0b0" stroke-width="1.3" stroke-linecap="round" stroke-linejoin="round"/></svg>
<div class="b" style="left:274px;top:343px;width:1636px;height:30px;background:#2a2a2a;border:1px solid #5e5e5e;border-radius:6px;"></div>
<span class="t" style="left:287.50px;top:351px;font-size:16.8px;line-height:16.8px;color:#ffffff;transform:scaleX(0.8771);">Row ID</span>
<svg class="b" style="left:1890.25px;top:352.2px;" width="16.5" height="10" viewBox="0 0 16.5 10"><path d="M2 2 L8.25 8 L14.5 2" fill="none" stroke="#e0e0e0" stroke-width="1.5" stroke-linecap="round" stroke-linejoin="round"/></svg>
<div class="b" style="left:0px;top:381px;width:1894px;height:556px;background:#0a0a0a;"></div>
<div class="b" style="left:33px;top:403px;width:1861px;height:534px;background:#ffffff;"></div>
<div class="b" style="left:33px;top:381px;width:55px;height:22px;background:#6c6c6c;"></div>
<div class="b" style="left:0px;top:403px;width:33px;height:23px;background:#6c6c6c;"></div>
<svg class="b" style="left:13px;top:385px;" width="18" height="17" viewBox="0 0 18 17"><path d="M17 1v15H1z" fill="#5f5f5f"/></svg>
<div class="b" style="left:88px;top:381px;width:1px;height:22px;background:#555555;"></div><div class="b" style="left:88px;top:403px;width:1px;height:534px;background:#d6d6d6;"></div><div class="b" style="left:213px;top:381px;width:1px;height:22px;background:#555555;"></div><div class="b" style="left:213px;top:403px;width:1px;height:534px;background:#d6d6d6;"></div><div class="b" style="left:300px;top:381px;width:1px;height:22px;background:#555555;"></div><div class="b" style="left:300px;top:403px;width:1px;height:534px;background:#d6d6d6;"></div><div class="b" style="left:387px;top:381px;width:1px;height:22px;background:#555555;"></div><div class="b" style="left:387px;top:403px;width:1px;height:534px;background:#d6d6d6;"></div><div class="b" style="left:498px;top:381px;width:1px;height:22px;background:#555555;"></div><div class="b" style="left:498px;top:403px;width:1px;height:534px;background:#d6d6d6;"></div><div class="b" style="left:590px;top:381px;width:1px;height:22px;background:#555555;"></div><div class="b" style="left:590px;top:403px;width:1px;height:534px;background:#d6d6d6;"></div><div class="b" style="left:728px;top:381px;width:1px;height:22px;background:#555555;"></div><div class="b" style="left:728px;top:403px;width:1px;height:534px;background:#d6d6d6;"></div><div class="b" style="left:822px;top:381px;width:1px;height:22px;background:#555555;"></div><div class="b" style="left:822px;top:403px;width:1px;height:534px;background:#d6d6d6;"></div><div class="b" style="left:920px;top:381px;width:1px;height:22px;background:#555555;"></div><div class="b" style="left:920px;top:403px;width:1px;height:534px;background:#d6d6d6;"></div><div class="b" style="left:1067px;top:381px;width:1px;height:22px;background:#555555;"></div><div class="b" style="left:1067px;top:403px;width:1px;height:534px;background:#d6d6d6;"></div><div class="b" style="left:1169px;top:381px;width:1px;height:22px;background:#555555;"></div><div class="b" style="left:1169px;top:403px;width:1px;height:534px;background:#d6d6d6;"></div><div class="b" style="left:1258px;top:381px;width:1px;height:22px;background:#555555;"></div><div class="b" style="left:1258px;top:403px;width:1px;height:534px;background:#d6d6d6;"></div><div class="b" style="left:1316px;top:381px;width:1px;height:22px;background:#555555;"></div><div class="b" style="left:1316px;top:403px;width:1px;height:534px;background:#d6d6d6;"></div><div class="b" style="left:1396px;top:381px;width:1px;height:22px;background:#555555;"></div><div class="b" style="left:1396px;top:403px;width:1px;height:534px;background:#d6d6d6;"></div><div class="b" style="left:1507px;top:381px;width:1px;height:22px;background:#555555;"></div><div class="b" style="left:1507px;top:403px;width:1px;height:534px;background:#d6d6d6;"></div><div class="b" style="left:1607px;top:381px;width:1px;height:22px;background:#555555;"></div><div class="b" style="left:1607px;top:403px;width:1px;height:534px;background:#d6d6d6;"></div><div class="b" style="left:1717px;top:381px;width:1px;height:22px;background:#555555;"></div><div class="b" style="left:1717px;top:403px;width:1px;height:534px;background:#d6d6d6;"></div><div class="b" style="left:1795px;top:381px;width:1px;height:22px;background:#555555;"></div><div class="b" style="left:1795px;top:403px;width:1px;height:534px;background:#d6d6d6;"></div><div class="b" style="left:1870px;top:381px;width:1px;height:22px;background:#555555;"></div><div class="b" style="left:1870px;top:403px;width:1px;height:534px;background:#d6d6d6;"></div><div class="b" style="left:32px;top:381px;width:1px;height:556px;background:#2a2a2a;"></div><div class="b" style="left:33px;top:426px;width:1861px;height:1px;background:#d6d6d6;"></div><div class="b" style="left:0px;top:426px;width:33px;height:1px;background:#5c5c5c;"></div><div class="b" style="left:33px;top:449px;width:1861px;height:1px;background:#d6d6d6;"></div><div class="b" style="left:0px;top:449px;width:33px;height:1px;background:#5c5c5c;"></div><div class="b" style="left:33px;top:472px;width:1861px;height:1px;background:#d6d6d6;"></div><div class="b" style="left:0px;top:472px;width:33px;height:1px;background:#5c5c5c;"></div><div class="b" style="left:33px;top:495px;width:1861px;height:1px;background:#d6d6d6;"></div><div class="b" style="left:0px;top:495px;width:33px;height:1px;background:#5c5c5c;"></div><div class="b" style="left:33px;top:518px;width:1861px;height:1px;background:#d6d6d6;"></div><div class="b" style="left:0px;top:518px;width:33px;height:1px;background:#5c5c5c;"></div><div class="b" style="left:33px;top:541px;width:1861px;height:1px;background:#d6d6d6;"></div><div class="b" style="left:0px;top:541px;width:33px;height:1px;background:#5c5c5c;"></div><div class="b" style="left:33px;top:564px;width:1861px;height:1px;background:#d6d6d6;"></div><div class="b" style="left:0px;top:564px;width:33px;height:1px;background:#5c5c5c;"></div><div class="b" style="left:33px;top:587px;width:1861px;height:1px;background:#d6d6d6;"></div><div class="b" style="left:0px;top:587px;width:33px;height:1px;background:#5c5c5c;"></div><div class="b" style="left:33px;top:610px;width:1861px;height:1px;background:#d6d6d6;"></div><div class="b" style="left:0px;top:610px;width:33px;height:1px;background:#5c5c5c;"></div><div class="b" style="left:33px;top:633px;width:1861px;height:1px;background:#d6d6d6;"></div><div class="b" style="left:0px;top:633px;width:33px;height:1px;background:#5c5c5c;"></div><div class="b" style="left:33px;top:656px;width:1861px;height:1px;background:#d6d6d6;"></div><div class="b" style="left:0px;top:656px;width:33px;height:1px;background:#5c5c5c;"></div><div class="b" style="left:33px;top:679px;width:1861px;height:1px;background:#d6d6d6;"></div><div class="b" style="left:0px;top:679px;width:33px;height:1px;background:#5c5c5c;"></div><div class="b" style="left:33px;top:702px;width:1861px;height:1px;background:#d6d6d6;"></div><div class="b" style="left:0px;top:702px;width:33px;height:1px;background:#5c5c5c;"></div><div class="b" style="left:33px;top:725px;width:1861px;height:1px;background:#d6d6d6;"></div><div class="b" style="left:0px;top:725px;width:33px;height:1px;background:#5c5c5c;"></div><div class="b" style="left:33px;top:748px;width:1861px;height:1px;background:#d6d6d6;"></div><div class="b" style="left:0px;top:748px;width:33px;height:1px;background:#5c5c5c;"></div><div class="b" style="left:33px;top:771px;width:1861px;height:1px;background:#d6d6d6;"></div><div class="b" style="left:0px;top:771px;width:33px;height:1px;background:#5c5c5c;"></div><div class="b" style="left:33px;top:794px;width:1861px;height:1px;background:#d6d6d6;"></div><div class="b" style="left:0px;top:794px;width:33px;height:1px;background:#5c5c5c;"></div><div class="b" style="left:33px;top:817px;width:1861px;height:1px;background:#d6d6d6;"></div><div class="b" style="left:0px;top:817px;width:33px;height:1px;background:#5c5c5c;"></div><div class="b" style="left:33px;top:840px;width:1861px;height:1px;background:#d6d6d6;"></div><div class="b" style="left:0px;top:840px;width:33px;height:1px;background:#5c5c5c;"></div><div class="b" style="left:33px;top:863px;width:1861px;height:1px;background:#d6d6d6;"></div><div class="b" style="left:0px;top:863px;width:33px;height:1px;background:#5c5c5c;"></div><div class="b" style="left:33px;top:886px;width:1861px;height:1px;background:#d6d6d6;"></div><div class="b" style="left:0px;top:886px;width:33px;height:1px;background:#5c5c5c;"></div><div class="b" style="left:33px;top:909px;width:1861px;height:1px;background:#d6d6d6;"></div><div class="b" style="left:0px;top:909px;width:33px;height:1px;background:#5c5c5c;"></div><div class="b" style="left:33px;top:932px;width:1861px;height:1px;background:#d6d6d6;"></div><div class="b" style="left:0px;top:932px;width:33px;height:1px;background:#5c5c5c;"></div>
<span class="t" style="left:56.20px;top:385px;font-size:16px;line-height:16px;color:#e6e6e6;transform:scaleX(0.9000);">A</span>
<span class="t" style="left:146.20px;top:385px;font-size:16px;line-height:16px;color:#e6e6e6;transform:scaleX(0.9000);">B</span>
<span class="t" style="left:251.80px;top:385px;font-size:16px;line-height:16px;color:#e6e6e6;transform:scaleX(0.9000);">C</span>
<span class="t" style="left:338.80px;top:385px;font-size:16px;line-height:16px;color:#e6e6e6;transform:scaleX(0.9000);">D</span>
<span class="t" style="left:438.20px;top:385px;font-size:16px;line-height:16px;color:#e6e6e6;transform:scaleX(0.9000);">E</span>
<span class="t" style="left:540.10px;top:385px;font-size:16px;line-height:16px;color:#e6e6e6;transform:scaleX(0.9000);">F</span>
<span class="t" style="left:653.90px;top:385px;font-size:16px;line-height:16px;color:#e6e6e6;transform:scaleX(0.9000);">G</span>
<span class="t" style="left:770.30px;top:385px;font-size:16px;line-height:16px;color:#e6e6e6;transform:scaleX(0.9000);">H</span>
<span class="t" style="left:869.50px;top:385px;font-size:16px;line-height:16px;color:#e6e6e6;transform:scaleX(0.9000);">I</span>
<span class="t" style="left:990.40px;top:385px;font-size:16px;line-height:16px;color:#e6e6e6;transform:scaleX(0.9000);">J</span>
<span class="t" style="left:1113.70px;top:385px;font-size:16px;line-height:16px;color:#e6e6e6;transform:scaleX(0.9000);">K</span>
<span class="t" style="left:1210.00px;top:385px;font-size:16px;line-height:16px;color:#e6e6e6;transform:scaleX(0.9000);">L</span>
<span class="t" style="left:1281.50px;top:385px;font-size:16px;line-height:16px;color:#e6e6e6;transform:scaleX(0.9000);">M</span>
<span class="t" style="left:1351.30px;top:385px;font-size:16px;line-height:16px;color:#e6e6e6;transform:scaleX(0.9000);">N</span>
<span class="t" style="left:1446.40px;top:385px;font-size:16px;line-height:16px;color:#e6e6e6;transform:scaleX(0.9000);">O</span>
<span class="t" style="left:1552.70px;top:385px;font-size:16px;line-height:16px;color:#e6e6e6;transform:scaleX(0.9000);">P</span>
<span class="t" style="left:1656.90px;top:385px;font-size:16px;line-height:16px;color:#e6e6e6;transform:scaleX(0.9000);">Q</span>
<span class="t" style="left:1751.30px;top:385px;font-size:16px;line-height:16px;color:#e6e6e6;transform:scaleX(0.9000);">R</span>
<span class="t" style="left:1828.20px;top:385px;font-size:16px;line-height:16px;color:#e6e6e6;transform:scaleX(0.9000);">S</span>
<span class="t" style="left:12.14px;top:408px;font-size:15.7px;line-height:15.7px;color:#e6e6e6;">1</span>
<span class="t" style="left:12.14px;top:431px;font-size:15.7px;line-height:15.7px;color:#e6e6e6;">2</span>
<span class="t" style="left:12.14px;top:454px;font-size:15.7px;line-height:15.7px;color:#e6e6e6;">3</span>
<span class="t" style="left:12.14px;top:477px;font-size:15.7px;line-height:15.7px;color:#e6e6e6;">4</span>
<span class="t" style="left:12.14px;top:500px;font-size:15.7px;line-height:15.7px;color:#e6e6e6;">5</span>
<span class="t" style="left:12.14px;top:523px;font-size:15.7px;line-height:15.7px;color:#e6e6e6;">6</span>
<span class="t" style="left:12.14px;top:546px;font-size:15.7px;line-height:15.7px;color:#e6e6e6;">7</span>
<span class="t" style="left:12.14px;top:569px;font-size:15.7px;line-height:15.7px;color:#e6e6e6;">8</span>
<span class="t" style="left:12.14px;top:592px;font-size:15.7px;line-height:15.7px;color:#e6e6e6;">9</span>
<span class="t" style="left:7.77px;top:615px;font-size:15.7px;line-height:15.7px;color:#e6e6e6;">10</span>
<span class="t" style="left:8.35px;top:638px;font-size:15.7px;line-height:15.7px;color:#e6e6e6;">11</span>
<span class="t" style="left:7.77px;top:661px;font-size:15.7px;line-height:15.7px;color:#e6e6e6;">12</span>
<span class="t" style="left:7.77px;top:684px;font-size:15.7px;line-height:15.7px;color:#e6e6e6;">13</span>
<span class="t" style="left:7.77px;top:707px;font-size:15.7px;line-height:15.7px;color:#e6e6e6;">14</span>
<span class="t" style="left:7.77px;top:730px;font-size:15.7px;line-height:15.7px;color:#e6e6e6;">15</span>
<span class="t" style="left:7.77px;top:753px;font-size:15.7px;line-height:15.7px;color:#e6e6e6;">16</span>
<span class="t" style="left:7.77px;top:776px;font-size:15.7px;line-height:15.7px;color:#e6e6e6;">17</span>
<span class="t" style="left:7.77px;top:799px;font-size:15.7px;line-height:15.7px;color:#e6e6e6;">18</span>
<span class="t" style="left:7.77px;top:822px;font-size:15.7px;line-height:15.7px;color:#e6e6e6;">19</span>
<span class="t" style="left:7.77px;top:845px;font-size:15.7px;line-height:15.7px;color:#e6e6e6;">20</span>
<span class="t" style="left:7.77px;top:868px;font-size:15.7px;line-height:15.7px;color:#e6e6e6;">21</span>
<span class="t" style="left:7.77px;top:891px;font-size:15.7px;line-height:15.7px;color:#e6e6e6;">22</span>
<span class="t" style="left:7.77px;top:914px;font-size:15.7px;line-height:15.7px;color:#e6e6e6;">23</span>
<div class="c" style="left:34px;top:404px;width:54px;height:22px"><span class="t" style="left:3.30px;top:4px;font-size:15.5px;line-height:15.5px;color:#000;transform:scaleX(0.9191);">Row ID</span></div>
<div class="c" style="left:89px;top:404px;width:124px;height:22px"><span class="t" style="left:3.30px;top:4px;font-size:15.5px;line-height:15.5px;color:#000;transform:scaleX(0.9373);">Order ID</span></div>
<div class="c" style="left:214px;top:404px;width:86px;height:22px"><span class="t" style="left:3.30px;top:4px;font-size:15.5px;line-height:15.5px;color:#000;transform:scaleX(0.9535);">Order Date</span></div>
<div class="c" style="left:301px;top:404px;width:86px;height:22px"><span class="t" style="left:3.30px;top:4px;font-size:15.5px;line-height:15.5px;color:#000;transform:scaleX(0.9798);">Ship Date</span></div>
<div class="c" style="left:388px;top:404px;width:110px;height:22px"><span class="t" style="left:3.30px;top:4px;font-size:15.5px;line-height:15.5px;color:#000;transform:scaleX(0.9770);">Ship Mode</span></div>
<div class="c" style="left:499px;top:404px;width:91px;height:22px"><span class="t" style="left:3.30px;top:4px;font-size:15.5px;line-height:15.5px;color:#000;transform:scaleX(0.9852);">Customer ID</span></div>
<div class="c" style="left:591px;top:404px;width:137px;height:22px"><span class="t" style="left:3.30px;top:4px;font-size:15.5px;line-height:15.5px;color:#000;transform:scaleX(0.9810);">Customer Name</span></div>
<div class="c" style="left:729px;top:404px;width:93px;height:22px"><span class="t" style="left:3.30px;top:4px;font-size:15.5px;line-height:15.5px;color:#000;transform:scaleX(0.9689);">Segment</span></div>
<div class="c" style="left:823px;top:404px;width:97px;height:22px"><span class="t" style="left:3.30px;top:4px;font-size:15.5px;line-height:15.5px;color:#000;transform:scaleX(1.0135);">Country</span></div>
<div class="c" style="left:921px;top:404px;width:146px;height:22px"><span class="t" style="left:3.30px;top:4px;font-size:15.5px;line-height:15.5px;color:#000;transform:scaleX(1.0153);">City</span></div>
<div class="c" style="left:1068px;top:404px;width:101px;height:22px"><span class="t" style="left:3.30px;top:4px;font-size:15.5px;line-height:15.5px;color:#000;transform:scaleX(0.9698);">State</span></div>
<div class="c" style="left:1170px;top:404px;width:88px;height:22px"><span class="t" style="left:3.30px;top:4px;font-size:15.5px;line-height:15.5px;color:#000;transform:scaleX(0.9924);">Postal Code</span></div>
<div class="c" style="left:1259px;top:404px;width:57px;height:22px"><span class="t" style="left:3.30px;top:4px;font-size:15.5px;line-height:15.5px;color:#000;transform:scaleX(0.9589);">Region</span></div>
<div class="c" style="left:1317px;top:404px;width:79px;height:22px"><span class="t" style="left:3.30px;top:4px;font-size:15.5px;line-height:15.5px;color:#000;transform:scaleX(0.9833);">Product ID</span></div>
<div class="c" style="left:1397px;top:404px;width:110px;height:22px"><span class="t" style="left:3.30px;top:4px;font-size:15.5px;line-height:15.5px;color:#000;transform:scaleX(0.9746);">Category</span></div>
<div class="c" style="left:1508px;top:404px;width:99px;height:22px"><span class="t" style="left:3.30px;top:4px;font-size:15.5px;line-height:15.5px;color:#000;transform:scaleX(0.9798);">Sub-Category</span></div>
<div class="c" style="left:1608px;top:404px;width:109px;height:22px"><span class="t" style="left:3.30px;top:4px;font-size:15.5px;line-height:15.5px;color:#000;transform:scaleX(0.9861);">Product Name</span></div>
<div class="c" style="left:1718px;top:404px;width:77px;height:22px"><span class="t" style="left:3.30px;top:4px;font-size:15.5px;line-height:15.5px;color:#000;transform:scaleX(0.9467);">Sales</span></div>
<div class="c" style="left:34px;top:427px;width:54px;height:22px"><span class="t" style="left:43.19px;top:4px;font-size:15.5px;line-height:15.5px;color:#000;transform:scaleX(0.9640);">1</span></div>
<div class="c" style="left:89px;top:427px;width:124px;height:22px"><span class="t" style="left:3.30px;top:4px;font-size:15.5px;line-height:15.5px;color:#000;transform:scaleX(1.0172);">CA-2017-152156</span></div>
<div class="c" style="left:214px;top:427px;width:86px;height:22px"><span class="t" style="left:10.10px;top:4px;font-size:15.5px;line-height:15.5px;color:#000;transform:scaleX(1.0824);">8/11/2017</span></div>
<div class="c" style="left:301px;top:427px;width:86px;height:22px"><span class="t" style="left:3.30px;top:4px;font-size:15.5px;line-height:15.5px;color:#000;transform:scaleX(0.9198);">##########</span></div>
<div class="c" style="left:388px;top:427px;width:110px;height:22px"><span class="t" style="left:3.30px;top:4px;font-size:15.5px;line-height:15.5px;color:#000;transform:scaleX(0.9798);">Second Class</span></div>
<div class="c" style="left:499px;top:427px;width:91px;height:22px"><span class="t" style="left:3.30px;top:4px;font-size:15.5px;line-height:15.5px;color:#000;">CG-12520</span></div>
<div class="c" style="left:591px;top:427px;width:137px;height:22px"><span class="t" style="left:3.30px;top:4px;font-size:15.5px;line-height:15.5px;color:#000;transform:scaleX(0.9656);">Claire Gute</span></div>
<div class="c" style="left:729px;top:427px;width:93px;height:22px"><span class="t" style="left:3.30px;top:4px;font-size:15.5px;line-height:15.5px;color:#000;">Consumer</span></div>
<div class="c" style="left:823px;top:427px;width:97px;height:22px"><span class="t" style="left:3.30px;top:4px;font-size:15.5px;line-height:15.5px;color:#000;transform:scaleX(0.9748);">United States</span></div>
<div class="c" style="left:921px;top:427px;width:146px;height:22px"><span class="t" style="left:3.30px;top:4px;font-size:15.5px;line-height:15.5px;color:#000;">Henderson</span></div>
<div class="c" style="left:1068px;top:427px;width:101px;height:22px"><span class="t" style="left:3.30px;top:4px;font-size:15.5px;line-height:15.5px;color:#000;transform:scaleX(0.9945);">Kentucky</span></div>
<div class="c" style="left:1170px;top:427px;width:88px;height:22px"><span class="t" style="left:40.10px;top:4px;font-size:15.5px;line-height:15.5px;color:#000;transform:scaleX(1.0532);">42420</span></div>
<div class="c" style="left:1259px;top:427px;width:57px;height:22px"><span class="t" style="left:3.30px;top:4px;font-size:15.5px;line-height:15.5px;color:#000;transform:scaleX(1.0148);">South</span></div>
<div class="c" style="left:1317px;top:427px;width:79px;height:22px"><span class="t" style="left:3.30px;top:4px;font-size:15.5px;line-height:15.5px;color:#000;transform:scaleX(0.9728);">FUR-BO-10001798</span></div>
<div class="c" style="left:1397px;top:427px;width:110px;height:22px"><span class="t" style="left:3.30px;top:4px;font-size:15.5px;line-height:15.5px;color:#000;">Furniture</span></div>
<div class="c" style="left:1508px;top:427px;width:99px;height:22px"><span class="t" style="left:3.30px;top:4px;font-size:15.5px;line-height:15.5px;color:#000;transform:scaleX(0.9917);">Bookcases</span></div>
<div class="c" style="left:1608px;top:427px;width:109px;height:22px"><span class="t" style="left:3.30px;top:4px;font-size:15.5px;line-height:15.5px;color:#000;transform:scaleX(0.9795);">Bush Somerset Collection Bookcase</span></div>
<div class="c" style="left:1718px;top:427px;width:77px;height:22px"><span class="t" style="left:25.10px;top:4px;font-size:15.5px;line-height:15.5px;color:#000;transform:scaleX(1.0419);">261.96</span></div>
<div class="c" style="left:34px;top:450px;width:54px;height:22px"><span class="t" style="left:43.19px;top:4px;font-size:15.5px;line-height:15.5px;color:#000;transform:scaleX(0.9640);">2</span></div>
<div class="c" style="left:89px;top:450px;width:124px;height:22px"><span class="t" style="left:3.30px;top:4px;font-size:15.5px;line-height:15.5px;color:#000;transform:scaleX(1.0172);">CA-2017-152156</span></div>
<div class="c" style="left:214px;top:450px;width:86px;height:22px"><span class="t" style="left:10.10px;top:4px;font-size:15.5px;line-height:15.5px;color:#000;transform:scaleX(1.0824);">8/11/2017</span></div>
<div class="c" style="left:301px;top:450px;width:86px;height:22px"><span class="t" style="left:3.30px;top:4px;font-size:15.5px;line-height:15.5px;color:#000;transform:scaleX(0.9198);">##########</span></div>
<div class="c" style="left:388px;top:450px;width:110px;height:22px"><span class="t" style="left:3.30px;top:4px;font-size:15.5px;line-height:15.5px;color:#000;transform:scaleX(0.9798);">Second Class</span></div>
<div class="c" style="left:499px;top:450px;width:91px;height:22px"><span class="t" style="left:3.30px;top:4px;font-size:15.5px;line-height:15.5px;color:#000;">CG-12520</span></div>
<div class="c" style="left:591px;top:450px;width:137px;height:22px"><span class="t" style="left:3.30px;top:4px;font-size:15.5px;line-height:15.5px;color:#000;transform:scaleX(0.9656);">Claire Gute</span></div>
<div class="c" style="left:729px;top:450px;width:93px;height:22px"><span class="t" style="left:3.30px;top:4px;font-size:15.5px;line-height:15.5px;color:#000;">Consumer</span></div>
<div class="c" style="left:823px;top:450px;width:97px;height:22px"><span class="t" style="left:3.30px;top:4px;font-size:15.5px;line-height:15.5px;color:#000;transform:scaleX(0.9748);">United States</span></div>
<div class="c" style="left:921px;top:450px;width:146px;height:22px"><span class="t" style="left:3.30px;top:4px;font-size:15.5px;line-height:15.5px;color:#000;">Henderson</span></div>
<div class="c" style="left:1068px;top:450px;width:101px;height:22px"><span class="t" style="left:3.30px;top:4px;font-size:15.5px;line-height:15.5px;color:#000;transform:scaleX(0.9945);">Kentucky</span></div>
<div class="c" style="left:1170px;top:450px;width:88px;height:22px"><span class="t" style="left:40.10px;top:4px;font-size:15.5px;line-height:15.5px;color:#000;transform:scaleX(1.0532);">42420</span></div>
<div class="c" style="left:1259px;top:450px;width:57px;height:22px"><span class="t" style="left:3.30px;top:4px;font-size:15.5px;line-height:15.5px;color:#000;transform:scaleX(1.0148);">South</span></div>
<div class="c" style="left:1317px;top:450px;width:79px;height:22px"><span class="t" style="left:3.30px;top:4px;font-size:15.5px;line-height:15.5px;color:#000;transform:scaleX(0.9727);">FUR-CH-10000454</span></div>
<div class="c" style="left:1397px;top:450px;width:110px;height:22px"><span class="t" style="left:3.30px;top:4px;font-size:15.5px;line-height:15.5px;color:#000;">Furniture</span></div>
<div class="c" style="left:1508px;top:450px;width:99px;height:22px"><span class="t" style="left:3.30px;top:4px;font-size:15.5px;line-height:15.5px;color:#000;">Chairs</span></div>
<div class="c" style="left:1608px;top:450px;width:109px;height:22px"><span class="t" style="left:3.30px;top:4px;font-size:15.5px;line-height:15.5px;color:#000;transform:scaleX(0.9730);">Hon Deluxe Fabric Upholstered Stacking Chairs</span></div>
<div class="c" style="left:1718px;top:450px;width:77px;height:22px"><span class="t" style="left:25.37px;top:4px;font-size:15.5px;line-height:15.5px;color:#000;transform:scaleX(1.0361);">731.94</span></div>
<div class="c" style="left:34px;top:473px;width:54px;height:22px"><span class="t" style="left:43.19px;top:4px;font-size:15.5px;line-height:15.5px;color:#000;transform:scaleX(0.9640);">3</span></div>
<div class="c" style="left:89px;top:473px;width:124px;height:22px"><span class="t" style="left:3.30px;top:4px;font-size:15.5px;line-height:15.5px;color:#000;transform:scaleX(1.0138);">CA-2017-138688</span></div>
<div class="c" style="left:214px;top:473px;width:86px;height:22px"><span class="t" style="left:11.10px;top:4px;font-size:15.5px;line-height:15.5px;color:#000;transform:scaleX(1.0499);">12/6/2017</span></div>
<div class="c" style="left:301px;top:473px;width:86px;height:22px"><span class="t" style="left:3.30px;top:4px;font-size:15.5px;line-height:15.5px;color:#000;transform:scaleX(1.0531);">16/06/2017</span></div>
<div class="c" style="left:388px;top:473px;width:110px;height:22px"><span class="t" style="left:3.30px;top:4px;font-size:15.5px;line-height:15.5px;color:#000;transform:scaleX(0.9798);">Second Class</span></div>
<div class="c" style="left:499px;top:473px;width:91px;height:22px"><span class="t" style="left:3.30px;top:4px;font-size:15.5px;line-height:15.5px;color:#000;transform:scaleX(1.0168);">DV-13045</span></div>
<div class="c" style="left:591px;top:473px;width:137px;height:22px"><span class="t" style="left:3.30px;top:4px;font-size:15.5px;line-height:15.5px;color:#000;transform:scaleX(0.9836);">Darrin Van Huff</span></div>
<div class="c" style="left:729px;top:473px;width:93px;height:22px"><span class="t" style="left:3.30px;top:4px;font-size:15.5px;line-height:15.5px;color:#000;">Corporate</span></div>
<div class="c" style="left:823px;top:473px;width:97px;height:22px"><span class="t" style="left:3.30px;top:4px;font-size:15.5px;line-height:15.5px;color:#000;transform:scaleX(0.9748);">United States</span></div>
<div class="c" style="left:921px;top:473px;width:146px;height:22px"><span class="t" style="left:3.30px;top:4px;font-size:15.5px;line-height:15.5px;color:#000;transform:scaleX(0.9638);">Los Angeles</span></div>
<div class="c" style="left:1068px;top:473px;width:101px;height:22px"><span class="t" style="left:3.30px;top:4px;font-size:15.5px;line-height:15.5px;color:#000;transform:scaleX(1.0185);">California</span></div>
<div class="c" style="left:1170px;top:473px;width:88px;height:22px"><span class="t" style="left:40.76px;top:4px;font-size:15.5px;line-height:15.5px;color:#000;transform:scaleX(1.0379);">90036</span></div>
<div class="c" style="left:1259px;top:473px;width:57px;height:22px"><span class="t" style="left:3.30px;top:4px;font-size:15.5px;line-height:15.5px;color:#000;transform:scaleX(1.0163);">West</span></div>
<div class="c" style="left:1317px;top:473px;width:79px;height:22px"><span class="t" style="left:3.30px;top:4px;font-size:15.5px;line-height:15.5px;color:#000;transform:scaleX(0.9731);">OFF-LA-10000240</span></div>
<div class="c" style="left:1397px;top:473px;width:110px;height:22px"><span class="t" style="left:3.30px;top:4px;font-size:15.5px;line-height:15.5px;color:#000;transform:scaleX(0.9964);">Office Supplies</span></div>
<div class="c" style="left:1508px;top:473px;width:99px;height:22px"><span class="t" style="left:3.30px;top:4px;font-size:15.5px;line-height:15.5px;color:#000;transform:scaleX(0.9786);">Labels</span></div>
<div class="c" style="left:1608px;top:473px;width:109px;height:22px"><span class="t" style="left:3.30px;top:4px;font-size:15.5px;line-height:15.5px;color:#000;transform:scaleX(0.9812);">Self-Adhesive Address Labels for Typewriters</span></div>
<div class="c" style="left:1718px;top:473px;width:77px;height:22px"><span class="t" style="left:34.48px;top:4px;font-size:15.5px;line-height:15.5px;color:#000;transform:scaleX(1.0320);">14.62</span></div>
<div class="c" style="left:34px;top:496px;width:54px;height:22px"><span class="t" style="left:43.19px;top:4px;font-size:15.5px;line-height:15.5px;color:#000;transform:scaleX(0.9640);">4</span></div>
<div class="c" style="left:89px;top:496px;width:124px;height:22px"><span class="t" style="left:3.30px;top:4px;font-size:15.5px;line-height:15.5px;color:#000;transform:scaleX(1.0172);">US-2016-108966</span></div>
<div class="c" style="left:214px;top:496px;width:86px;height:22px"><span class="t" style="left:3.30px;top:4px;font-size:15.5px;line-height:15.5px;color:#000;transform:scaleX(0.9198);">##########</span></div>
<div class="c" style="left:301px;top:496px;width:86px;height:22px"><span class="t" style="left:3.30px;top:4px;font-size:15.5px;line-height:15.5px;color:#000;transform:scaleX(1.0571);">18/10/2016</span></div>
<div class="c" style="left:388px;top:496px;width:110px;height:22px"><span class="t" style="left:3.30px;top:4px;font-size:15.5px;line-height:15.5px;color:#000;transform:scaleX(0.9785);">Standard Class</span></div>
<div class="c" style="left:499px;top:496px;width:91px;height:22px"><span class="t" style="left:3.30px;top:4px;font-size:15.5px;line-height:15.5px;color:#000;transform:scaleX(0.9920);">SO-20335</span></div>
<div class="c" style="left:591px;top:496px;width:137px;height:22px"><span class="t" style="left:3.30px;top:4px;font-size:15.5px;line-height:15.5px;color:#000;transform:scaleX(0.9752);">Sean O'Donnell</span></div>
<div class="c" style="left:729px;top:496px;width:93px;height:22px"><span class="t" style="left:3.30px;top:4px;font-size:15.5px;line-height:15.5px;color:#000;">Consumer</span></div>
<div class="c" style="left:823px;top:496px;width:97px;height:22px"><span class="t" style="left:3.30px;top:4px;font-size:15.5px;line-height:15.5px;color:#000;transform:scaleX(0.9748);">United States</span></div>
<div class="c" style="left:921px;top:496px;width:146px;height:22px"><span class="t" style="left:3.30px;top:4px;font-size:15.5px;line-height:15.5px;color:#000;transform:scaleX(0.9696);">Fort Lauderdale</span></div>
<div class="c" style="left:1068px;top:496px;width:101px;height:22px"><span class="t" style="left:3.30px;top:4px;font-size:15.5px;line-height:15.5px;color:#000;transform:scaleX(0.9853);">Florida</span></div>
<div class="c" style="left:1170px;top:496px;width:88px;height:22px"><span class="t" style="left:40.76px;top:4px;font-size:15.5px;line-height:15.5px;color:#000;transform:scaleX(1.0663);">33311</span></div>
<div class="c" style="left:1259px;top:496px;width:57px;height:22px"><span class="t" style="left:3.30px;top:4px;font-size:15.5px;line-height:15.5px;color:#000;transform:scaleX(1.0148);">South</span></div>
<div class="c" style="left:1317px;top:496px;width:79px;height:22px"><span class="t" style="left:3.30px;top:4px;font-size:15.5px;line-height:15.5px;color:#000;transform:scaleX(0.9816);">FUR-TA-10000577</span></div>
<div class="c" style="left:1397px;top:496px;width:110px;height:22px"><span class="t" style="left:3.30px;top:4px;font-size:15.5px;line-height:15.5px;color:#000;">Furniture</span></div>
<div class="c" style="left:1508px;top:496px;width:99px;height:22px"><span class="t" style="left:3.30px;top:4px;font-size:15.5px;line-height:15.5px;color:#000;transform:scaleX(0.9797);">Tables</span></div>
<div class="c" style="left:1608px;top:496px;width:109px;height:22px"><span class="t" style="left:3.30px;top:4px;font-size:15.5px;line-height:15.5px;color:#000;transform:scaleX(0.9833);">Bretford CR4500 Series Slim Rectangular Table</span></div>
<div class="c" style="left:1718px;top:496px;width:77px;height:22px"><span class="t" style="left:16.00px;top:4px;font-size:15.5px;line-height:15.5px;color:#000;transform:scaleX(1.0440);">957.578</span></div>
<div class="c" style="left:34px;top:519px;width:54px;height:22px"><span class="t" style="left:43.19px;top:4px;font-size:15.5px;line-height:15.5px;color:#000;transform:scaleX(0.9640);">5</span></div>
<div class="c" style="left:89px;top:519px;width:124px;height:22px"><span class="t" style="left:3.30px;top:4px;font-size:15.5px;line-height:15.5px;color:#000;transform:scaleX(1.0172);">US-2016-108966</span></div>
<div class="c" style="left:214px;top:519px;width:86px;height:22px"><span class="t" style="left:3.30px;top:4px;font-size:15.5px;line-height:15.5px;color:#000;transform:scaleX(0.9198);">##########</span></div>
<div class="c" style="left:301px;top:519px;width:86px;height:22px"><span class="t" style="left:3.30px;top:4px;font-size:15.5px;line-height:15.5px;color:#000;transform:scaleX(1.0571);">18/10/2016</span></div>
<div class="c" style="left:388px;top:519px;width:110px;height:22px"><span class="t" style="left:3.30px;top:4px;font-size:15.5px;line-height:15.5px;color:#000;transform:scaleX(0.9785);">Standard Class</span></div>
<div class="c" style="left:499px;top:519px;width:91px;height:22px"><span class="t" style="left:3.30px;top:4px;font-size:15.5px;line-height:15.5px;color:#000;transform:scaleX(0.9920);">SO-20335</span></div>
<div class="c" style="left:591px;top:519px;width:137px;height:22px"><span class="t" style="left:3.30px;top:4px;font-size:15.5px;line-height:15.5px;color:#000;transform:scaleX(0.9752);">Sean O'Donnell</span></div>
<div class="c" style="left:729px;top:519px;width:93px;height:22px"><span class="t" style="left:3.30px;top:4px;font-size:15.5px;line-height:15.5px;color:#000;">Consumer</span></div>
<div class="c" style="left:823px;top:519px;width:97px;height:22px"><span class="t" style="left:3.30px;top:4px;font-size:15.5px;line-height:15.5px;color:#000;transform:scaleX(0.9748);">United States</span></div>
<div class="c" style="left:921px;top:519px;width:146px;height:22px"><span class="t" style="left:3.30px;top:4px;font-size:15.5px;line-height:15.5px;color:#000;transform:scaleX(0.9696);">Fort Lauderdale</span></div>
<div class="c" style="left:1068px;top:519px;width:101px;height:22px"><span class="t" style="left:3.30px;top:4px;font-size:15.5px;line-height:15.5px;color:#000;transform:scaleX(0.9853);">Florida</span></div>
<div class="c" style="left:1170px;top:519px;width:88px;height:22px"><span class="t" style="left:40.76px;top:4px;font-size:15.5px;line-height:15.5px;color:#000;transform:scaleX(1.0663);">33311</span></div>
<div class="c" style="left:1259px;top:519px;width:57px;height:22px"><span class="t" style="left:3.30px;top:4px;font-size:15.5px;line-height:15.5px;color:#000;transform:scaleX(1.0148);">South</span></div>
<div class="c" style="left:1317px;top:519px;width:79px;height:22px"><span class="t" style="left:3.30px;top:4px;font-size:15.5px;line-height:15.5px;color:#000;transform:scaleX(0.9796);">OFF-ST-10000760</span></div>
<div class="c" style="left:1397px;top:519px;width:110px;height:22px"><span class="t" style="left:3.30px;top:4px;font-size:15.5px;line-height:15.5px;color:#000;transform:scaleX(0.9964);">Office Supplies</span></div>
<div class="c" style="left:1508px;top:519px;width:99px;height:22px"><span class="t" style="left:3.30px;top:4px;font-size:15.5px;line-height:15.5px;color:#000;transform:scaleX(0.9617);">Storage</span></div>
<div class="c" style="left:1608px;top:519px;width:109px;height:22px"><span class="t" style="left:3.30px;top:4px;font-size:15.5px;line-height:15.5px;color:#000;transform:scaleX(0.9510);">Eldon Fold 'N Roll Cart System</span></div>
<div class="c" style="left:1718px;top:519px;width:77px;height:22px"><span class="t" style="left:25.37px;top:4px;font-size:15.5px;line-height:15.5px;color:#000;transform:scaleX(1.0361);">22.368</span></div>
<div class="c" style="left:34px;top:542px;width:54px;height:22px"><span class="t" style="left:43.19px;top:4px;font-size:15.5px;line-height:15.5px;color:#000;transform:scaleX(0.9640);">6</span></div>
<div class="c" style="left:89px;top:542px;width:124px;height:22px"><span class="t" style="left:3.30px;top:4px;font-size:15.5px;line-height:15.5px;color:#000;transform:scaleX(1.0238);">CA-2015-115812</span></div>
<div class="c" style="left:214px;top:542px;width:86px;height:22px"><span class="t" style="left:19.40px;top:4px;font-size:15.5px;line-height:15.5px;color:#000;transform:scaleX(1.0623);">9/6/2015</span></div>
<div class="c" style="left:301px;top:542px;width:86px;height:22px"><span class="t" style="left:3.30px;top:4px;font-size:15.5px;line-height:15.5px;color:#000;transform:scaleX(1.0571);">14/06/2015</span></div>
<div class="c" style="left:388px;top:542px;width:110px;height:22px"><span class="t" style="left:3.30px;top:4px;font-size:15.5px;line-height:15.5px;color:#000;transform:scaleX(0.9785);">Standard Class</span></div>
<div class="c" style="left:499px;top:542px;width:91px;height:22px"><span class="t" style="left:3.30px;top:4px;font-size:15.5px;line-height:15.5px;color:#000;transform:scaleX(1.0211);">BH-11710</span></div>
<div class="c" style="left:591px;top:542px;width:137px;height:22px"><span class="t" style="left:3.30px;top:4px;font-size:15.5px;line-height:15.5px;color:#000;transform:scaleX(0.9960);">Brosina Hoffman</span></div>
<div class="c" style="left:729px;top:542px;width:93px;height:22px"><span class="t" style="left:3.30px;top:4px;font-size:15.5px;line-height:15.5px;color:#000;">Consumer</span></div>
<div class="c" style="left:823px;top:542px;width:97px;height:22px"><span class="t" style="left:3.30px;top:4px;font-size:15.5px;line-height:15.5px;color:#000;transform:scaleX(0.9748);">United States</span></div>
<div class="c" style="left:921px;top:542px;width:146px;height:22px"><span class="t" style="left:3.30px;top:4px;font-size:15.5px;line-height:15.5px;color:#000;transform:scaleX(0.9638);">Los Angeles</span></div>
<div class="c" style="left:1068px;top:542px;width:101px;height:22px"><span class="t" style="left:3.30px;top:4px;font-size:15.5px;line-height:15.5px;color:#000;transform:scaleX(1.0185);">California</span></div>
<div class="c" style="left:1170px;top:542px;width:88px;height:22px"><span class="t" style="left:40.76px;top:4px;font-size:15.5px;line-height:15.5px;color:#000;transform:scaleX(1.0379);">90032</span></div>
<div class="c" style="left:1259px;top:542px;width:57px;height:22px"><span class="t" style="left:3.30px;top:4px;font-size:15.5px;line-height:15.5px;color:#000;transform:scaleX(1.0163);">West</span></div>
<div class="c" style="left:1317px;top:542px;width:79px;height:22px"><span class="t" style="left:3.30px;top:4px;font-size:15.5px;line-height:15.5px;color:#000;transform:scaleX(0.9730);">FUR-FU-10001487</span></div>
<div class="c" style="left:1397px;top:542px;width:110px;height:22px"><span class="t" style="left:3.30px;top:4px;font-size:15.5px;line-height:15.5px;color:#000;">Furniture</span></div>
<div class="c" style="left:1508px;top:542px;width:99px;height:22px"><span class="t" style="left:3.30px;top:4px;font-size:15.5px;line-height:15.5px;color:#000;transform:scaleX(1.0122);">Furnishings</span></div>
<div class="c" style="left:1608px;top:542px;width:109px;height:22px"><span class="t" style="left:3.30px;top:4px;font-size:15.5px;line-height:15.5px;color:#000;transform:scaleX(0.9697);">Eldon Expressions Wood and Plastic Desk</span></div>
<div class="c" style="left:1718px;top:542px;width:77px;height:22px"><span class="t" style="left:34.48px;top:4px;font-size:15.5px;line-height:15.5px;color:#000;transform:scaleX(1.0320);">48.86</span></div>
<div class="c" style="left:34px;top:565px;width:54px;height:22px"><span class="t" style="left:43.19px;top:4px;font-size:15.5px;line-height:15.5px;color:#000;transform:scaleX(0.9640);">7</span></div>
<div class="c" style="left:89px;top:565px;width:124px;height:22px"><span class="t" style="left:3.30px;top:4px;font-size:15.5px;line-height:15.5px;color:#000;transform:scaleX(1.0238);">CA-2015-115812</span></div>
<div class="c" style="left:214px;top:565px;width:86px;height:22px"><span class="t" style="left:19.40px;top:4px;font-size:15.5px;line-height:15.5px;color:#000;transform:scaleX(1.0623);">9/6/2015</span></div>
<div class="c" style="left:301px;top:565px;width:86px;height:22px"><span class="t" style="left:3.30px;top:4px;font-size:15.5px;line-height:15.5px;color:#000;transform:scaleX(1.0571);">14/06/2015</span></div>
<div class="c" style="left:388px;top:565px;width:110px;height:22px"><span class="t" style="left:3.30px;top:4px;font-size:15.5px;line-height:15.5px;color:#000;transform:scaleX(0.9785);">Standard Class</span></div>
<div class="c" style="left:499px;top:565px;width:91px;height:22px"><span class="t" style="left:3.30px;top:4px;font-size:15.5px;line-height:15.5px;color:#000;transform:scaleX(1.0211);">BH-11710</span></div>
<div class="c" style="left:591px;top:565px;width:137px;height:22px"><span class="t" style="left:3.30px;top:4px;font-size:15.5px;line-height:15.5px;color:#000;transform:scaleX(0.9960);">Brosina Hoffman</span></div>
<div class="c" style="left:729px;top:565px;width:93px;height:22px"><span class="t" style="left:3.30px;top:4px;font-size:15.5px;line-height:15.5px;color:#000;">Consumer</span></div>
<div class="c" style="left:823px;top:565px;width:97px;height:22px"><span class="t" style="left:3.30px;top:4px;font-size:15.5px;line-height:15.5px;color:#000;transform:scaleX(0.9748);">United States</span></div>
<div class="c" style="left:921px;top:565px;width:146px;height:22px"><span class="t" style="left:3.30px;top:4px;font-size:15.5px;line-height:15.5px;color:#000;transform:scaleX(0.9638);">Los Angeles</span></div>
<div class="c" style="left:1068px;top:565px;width:101px;height:22px"><span class="t" style="left:3.30px;top:4px;font-size:15.5px;line-height:15.5px;color:#000;transform:scaleX(1.0185);">California</span></div>
<div class="c" style="left:1170px;top:565px;width:88px;height:22px"><span class="t" style="left:40.76px;top:4px;font-size:15.5px;line-height:15.5px;color:#000;transform:scaleX(1.0379);">90032</span></div>
<div class="c" style="left:1259px;top:565px;width:57px;height:22px"><span class="t" style="left:3.30px;top:4px;font-size:15.5px;line-height:15.5px;color:#000;transform:scaleX(1.0163);">West</span></div>
<div class="c" style="left:1317px;top:565px;width:79px;height:22px"><span class="t" style="left:3.30px;top:4px;font-size:15.5px;line-height:15.5px;color:#000;transform:scaleX(0.9729);">OFF-AR-10002833</span></div>
<div class="c" style="left:1397px;top:565px;width:110px;height:22px"><span class="t" style="left:3.30px;top:4px;font-size:15.5px;line-height:15.5px;color:#000;transform:scaleX(0.9964);">Office Supplies</span></div>
<div class="c" style="left:1508px;top:565px;width:99px;height:22px"><span class="t" style="left:3.30px;top:4px;font-size:15.5px;line-height:15.5px;color:#000;">Art</span></div>
<div class="c" style="left:1608px;top:565px;width:109px;height:22px"><span class="t" style="left:3.30px;top:4px;font-size:15.5px;line-height:15.5px;color:#000;transform:scaleX(0.9898);">Newell 322</span></div>
<div class="c" style="left:1718px;top:565px;width:77px;height:22px"><span class="t" style="left:43.59px;top:4px;font-size:15.5px;line-height:15.5px;color:#000;transform:scaleX(1.0248);">7.28</span></div>
<div class="c" style="left:34px;top:588px;width:54px;height:22px"><span class="t" style="left:43.19px;top:4px;font-size:15.5px;line-height:15.5px;color:#000;transform:scaleX(0.9640);">8</span></div>
<div class="c" style="left:89px;top:588px;width:124px;height:22px"><span class="t" style="left:3.30px;top:4px;font-size:15.5px;line-height:15.5px;color:#000;transform:scaleX(1.0238);">CA-2015-115812</span></div>
<div class="c" style="left:214px;top:588px;width:86px;height:22px"><span class="t" style="left:19.40px;top:4px;font-size:15.5px;line-height:15.5px;color:#000;transform:scaleX(1.0623);">9/6/2015</span></div>
<div class="c" style="left:301px;top:588px;width:86px;height:22px"><span class="t" style="left:3.30px;top:4px;font-size:15.5px;line-height:15.5px;color:#000;transform:scaleX(1.0571);">14/06/2015</span></div>
<div class="c" style="left:388px;top:588px;width:110px;height:22px"><span class="t" style="left:3.30px;top:4px;font-size:15.5px;line-height:15.5px;color:#000;transform:scaleX(0.9785);">Standard Class</span></div>
<div class="c" style="left:499px;top:588px;width:91px;height:22px"><span class="t" style="left:3.30px;top:4px;font-size:15.5px;line-height:15.5px;color:#000;transform:scaleX(1.0211);">BH-11710</span></div>
<div class="c" style="left:591px;top:588px;width:137px;height:22px"><span class="t" style="left:3.30px;top:4px;font-size:15.5px;line-height:15.5px;color:#000;transform:scaleX(0.9960);">Brosina Hoffman</span></div>
<div class="c" style="left:729px;top:588px;width:93px;height:22px"><span class="t" style="left:3.30px;top:4px;font-size:15.5px;line-height:15.5px;color:#000;">Consumer</span></div>
<div class="c" style="left:823px;top:588px;width:97px;height:22px"><span class="t" style="left:3.30px;top:4px;font-size:15.5px;line-height:15.5px;color:#000;transform:scaleX(0.9748);">United States</span></div>
<div class="c" style="left:921px;top:588px;width:146px;height:22px"><span class="t" style="left:3.30px;top:4px;font-size:15.5px;line-height:15.5px;color:#000;transform:scaleX(0.9638);">Los Angeles</span></div>
<div class="c" style="left:1068px;top:588px;width:101px;height:22px"><span class="t" style="left:3.30px;top:4px;font-size:15.5px;line-height:15.5px;color:#000;transform:scaleX(1.0185);">California</span></div>
<div class="c" style="left:1170px;top:588px;width:88px;height:22px"><span class="t" style="left:40.76px;top:4px;font-size:15.5px;line-height:15.5px;color:#000;transform:scaleX(1.0379);">90032</span></div>
<div class="c" style="left:1259px;top:588px;width:57px;height:22px"><span class="t" style="left:3.30px;top:4px;font-size:15.5px;line-height:15.5px;color:#000;transform:scaleX(1.0163);">West</span></div>
<div class="c" style="left:1317px;top:588px;width:79px;height:22px"><span class="t" style="left:3.30px;top:4px;font-size:15.5px;line-height:15.5px;color:#000;transform:scaleX(0.9730);">TEC-PH-10002275</span></div>
<div class="c" style="left:1397px;top:588px;width:110px;height:22px"><span class="t" style="left:3.30px;top:4px;font-size:15.5px;line-height:15.5px;color:#000;">Technology</span></div>
<div class="c" style="left:1508px;top:588px;width:99px;height:22px"><span class="t" style="left:3.30px;top:4px;font-size:15.5px;line-height:15.5px;color:#000;transform:scaleX(0.9852);">Phones</span></div>
<div class="c" style="left:1608px;top:588px;width:109px;height:22px"><span class="t" style="left:3.30px;top:4px;font-size:15.5px;line-height:15.5px;color:#000;transform:scaleX(0.9688);">Mitel 5320 IP Phone VoIP phone</span></div>
<div class="c" style="left:1718px;top:588px;width:77px;height:22px"><span class="t" style="left:16.26px;top:4px;font-size:15.5px;line-height:15.5px;color:#000;transform:scaleX(1.0393);">907.152</span></div>
<div class="c" style="left:34px;top:611px;width:54px;height:22px"><span class="t" style="left:43.19px;top:4px;font-size:15.5px;line-height:15.5px;color:#000;transform:scaleX(0.9640);">9</span></div>
<div class="c" style="left:89px;top:611px;width:124px;height:22px"><span class="t" style="left:3.30px;top:4px;font-size:15.5px;line-height:15.5px;color:#000;transform:scaleX(1.0238);">CA-2015-115812</span></div>
<div class="c" style="left:214px;top:611px;width:86px;height:22px"><span class="t" style="left:19.40px;top:4px;font-size:15.5px;line-height:15.5px;color:#000;transform:scaleX(1.0623);">9/6/2015</span></div>
<div class="c" style="left:301px;top:611px;width:86px;height:22px"><span class="t" style="left:3.30px;top:4px;font-size:15.5px;line-height:15.5px;color:#000;transform:scaleX(1.0571);">14/06/2015</span></div>
<div class="c" style="left:388px;top:611px;width:110px;height:22px"><span class="t" style="left:3.30px;top:4px;font-size:15.5px;line-height:15.5px;color:#000;transform:scaleX(0.9785);">Standard Class</span></div>
<div class="c" style="left:499px;top:611px;width:91px;height:22px"><span class="t" style="left:3.30px;top:4px;font-size:15.5px;line-height:15.5px;color:#000;transform:scaleX(1.0211);">BH-11710</span></div>
<div class="c" style="left:591px;top:611px;width:137px;height:22px"><span class="t" style="left:3.30px;top:4px;font-size:15.5px;line-height:15.5px;color:#000;transform:scaleX(0.9960);">Brosina Hoffman</span></div>
<div class="c" style="left:729px;top:611px;width:93px;height:22px"><span class="t" style="left:3.30px;top:4px;font-size:15.5px;line-height:15.5px;color:#000;">Consumer</span></div>
<div class="c" style="left:823px;top:611px;width:97px;height:22px"><span class="t" style="left:3.30px;top:4px;font-size:15.5px;line-height:15.5px;color:#000;transform:scaleX(0.9748);">United States</span></div>
<div class="c" style="left:921px;top:611px;width:146px;height:22px"><span class="t" style="left:3.30px;top:4px;font-size:15.5px;line-height:15.5px;color:#000;transform:scaleX(0.9638);">Los Angeles</span></div>
<div class="c" style="left:1068px;top:611px;width:101px;height:22px"><span class="t" style="left:3.30px;top:4px;font-size:15.5px;line-height:15.5px;color:#000;transform:scaleX(1.0185);">California</span></div>
<div class="c" style="left:1170px;top:611px;width:88px;height:22px"><span class="t" style="left:40.76px;top:4px;font-size:15.5px;line-height:15.5px;color:#000;transform:scaleX(1.0379);">90032</span></div>
<div class="c" style="left:1259px;top:611px;width:57px;height:22px"><span class="t" style="left:3.30px;top:4px;font-size:15.5px;line-height:15.5px;color:#000;transform:scaleX(1.0163);">West</span></div>
<div class="c" style="left:1317px;top:611px;width:79px;height:22px"><span class="t" style="left:3.30px;top:4px;font-size:15.5px;line-height:15.5px;color:#000;transform:scaleX(0.9735);">OFF-BI-10003910</span></div>
<div class="c" style="left:1397px;top:611px;width:110px;height:22px"><span class="t" style="left:3.30px;top:4px;font-size:15.5px;line-height:15.5px;color:#000;transform:scaleX(0.9964);">Office Supplies</span></div>
<div class="c" style="left:1508px;top:611px;width:99px;height:22px"><span class="t" style="left:3.30px;top:4px;font-size:15.5px;line-height:15.5px;color:#000;transform:scaleX(0.9855);">Binders</span></div>
<div class="c" style="left:1608px;top:611px;width:109px;height:22px"><span class="t" style="left:3.30px;top:4px;font-size:15.5px;line-height:15.5px;color:#000;transform:scaleX(0.9703);">DXL Angle-View Binders with Locking Rings</span></div>
<div class="c" style="left:1718px;top:611px;width:77px;height:22px"><span class="t" style="left:25.37px;top:4px;font-size:15.5px;line-height:15.5px;color:#000;transform:scaleX(1.0361);">18.504</span></div>
<div class="c" style="left:34px;top:634px;width:54px;height:22px"><span class="t" style="left:34.08px;top:4px;font-size:15.5px;line-height:15.5px;color:#000;transform:scaleX(1.0104);">10</span></div>
<div class="c" style="left:89px;top:634px;width:124px;height:22px"><span class="t" style="left:3.30px;top:4px;font-size:15.5px;line-height:15.5px;color:#000;transform:scaleX(1.0238);">CA-2015-115812</span></div>
<div class="c" style="left:214px;top:634px;width:86px;height:22px"><span class="t" style="left:19.40px;top:4px;font-size:15.5px;line-height:15.5px;color:#000;transform:scaleX(1.0623);">9/6/2015</span></div>
<div class="c" style="left:301px;top:634px;width:86px;height:22px"><span class="t" style="left:3.30px;top:4px;font-size:15.5px;line-height:15.5px;color:#000;transform:scaleX(1.0571);">14/06/2015</span></div>
<div class="c" style="left:388px;top:634px;width:110px;height:22px"><span class="t" style="left:3.30px;top:4px;font-size:15.5px;line-height:15.5px;color:#000;transform:scaleX(0.9785);">Standard Class</span></div>
<div class="c" style="left:499px;top:634px;width:91px;height:22px"><span class="t" style="left:3.30px;top:4px;font-size:15.5px;line-height:15.5px;color:#000;transform:scaleX(1.0211);">BH-11710</span></div>
<div class="c" style="left:591px;top:634px;width:137px;height:22px"><span class="t" style="left:3.30px;top:4px;font-size:15.5px;line-height:15.5px;color:#000;transform:scaleX(0.9960);">Brosina Hoffman</span></div>
<div class="c" style="left:729px;top:634px;width:93px;height:22px"><span class="t" style="left:3.30px;top:4px;font-size:15.5px;line-height:15.5px;color:#000;">Consumer</span></div>
<div class="c" style="left:823px;top:634px;width:97px;height:22px"><span class="t" style="left:3.30px;top:4px;font-size:15.5px;line-height:15.5px;color:#000;transform:scaleX(0.9748);">United States</span></div>
<div class="c" style="left:921px;top:634px;width:146px;height:22px"><span class="t" style="left:3.30px;top:4px;font-size:15.5px;line-height:15.5px;color:#000;transform:scaleX(0.9638);">Los Angeles</span></div>
<div class="c" style="left:1068px;top:634px;width:101px;height:22px"><span class="t" style="left:3.30px;top:4px;font-size:15.5px;line-height:15.5px;color:#000;transform:scaleX(1.0185);">California</span></div>
<div class="c" style="left:1170px;top:634px;width:88px;height:22px"><span class="t" style="left:40.76px;top:4px;font-size:15.5px;line-height:15.5px;color:#000;transform:scaleX(1.0379);">90032</span></div>
<div class="c" style="left:1259px;top:634px;width:57px;height:22px"><span class="t" style="left:3.30px;top:4px;font-size:15.5px;line-height:15.5px;color:#000;transform:scaleX(1.0163);">West</span></div>
<div class="c" style="left:1317px;top:634px;width:79px;height:22px"><span class="t" style="left:3.30px;top:4px;font-size:15.5px;line-height:15.5px;color:#000;transform:scaleX(0.9730);">OFF-AP-10002892</span></div>
<div class="c" style="left:1397px;top:634px;width:110px;height:22px"><span class="t" style="left:3.30px;top:4px;font-size:15.5px;line-height:15.5px;color:#000;transform:scaleX(0.9964);">Office Supplies</span></div>
<div class="c" style="left:1508px;top:634px;width:99px;height:22px"><span class="t" style="left:3.30px;top:4px;font-size:15.5px;line-height:15.5px;color:#000;">Appliances</span></div>
<div class="c" style="left:1608px;top:634px;width:109px;height:22px"><span class="t" style="left:3.30px;top:4px;font-size:15.5px;line-height:15.5px;color:#000;transform:scaleX(0.9767);">Belkin F5C206VTEL 6 Outlet Surge</span></div>
<div class="c" style="left:1718px;top:634px;width:77px;height:22px"><span class="t" style="left:34.48px;top:4px;font-size:15.5px;line-height:15.5px;color:#000;transform:scaleX(1.0634);">114.9</span></div>
<div class="c" style="left:34px;top:657px;width:54px;height:22px"><span class="t" style="left:34.08px;top:4px;font-size:15.5px;line-height:15.5px;color:#000;transform:scaleX(1.0825);">11</span></div>
<div class="c" style="left:89px;top:657px;width:124px;height:22px"><span class="t" style="left:3.30px;top:4px;font-size:15.5px;line-height:15.5px;color:#000;transform:scaleX(1.0238);">CA-2015-115812</span></div>
<div class="c" style="left:214px;top:657px;width:86px;height:22px"><span class="t" style="left:19.40px;top:4px;font-size:15.5px;line-height:15.5px;color:#000;transform:scaleX(1.0623);">9/6/2015</span></div>
<div class="c" style="left:301px;top:657px;width:86px;height:22px"><span class="t" style="left:3.30px;top:4px;font-size:15.5px;line-height:15.5px;color:#000;transform:scaleX(1.0571);">14/06/2015</span></div>
<div class="c" style="left:388px;top:657px;width:110px;height:22px"><span class="t" style="left:3.30px;top:4px;font-size:15.5px;line-height:15.5px;color:#000;transform:scaleX(0.9785);">Standard Class</span></div>
<div class="c" style="left:499px;top:657px;width:91px;height:22px"><span class="t" style="left:3.30px;top:4px;font-size:15.5px;line-height:15.5px;color:#000;transform:scaleX(1.0211);">BH-11710</span></div>
<div class="c" style="left:591px;top:657px;width:137px;height:22px"><span class="t" style="left:3.30px;top:4px;font-size:15.5px;line-height:15.5px;color:#000;transform:scaleX(0.9960);">Brosina Hoffman</span></div>
<div class="c" style="left:729px;top:657px;width:93px;height:22px"><span class="t" style="left:3.30px;top:4px;font-size:15.5px;line-height:15.5px;color:#000;">Consumer</span></div>
<div class="c" style="left:823px;top:657px;width:97px;height:22px"><span class="t" style="left:3.30px;top:4px;font-size:15.5px;line-height:15.5px;color:#000;transform:scaleX(0.9748);">United States</span></div>
<div class="c" style="left:921px;top:657px;width:146px;height:22px"><span class="t" style="left:3.30px;top:4px;font-size:15.5px;line-height:15.5px;color:#000;transform:scaleX(0.9638);">Los Angeles</span></div>
<div class="c" style="left:1068px;top:657px;width:101px;height:22px"><span class="t" style="left:3.30px;top:4px;font-size:15.5px;line-height:15.5px;color:#000;transform:scaleX(1.0185);">California</span></div>
<div class="c" style="left:1170px;top:657px;width:88px;height:22px"><span class="t" style="left:40.76px;top:4px;font-size:15.5px;line-height:15.5px;color:#000;transform:scaleX(1.0379);">90032</span></div>
<div class="c" style="left:1259px;top:657px;width:57px;height:22px"><span class="t" style="left:3.30px;top:4px;font-size:15.5px;line-height:15.5px;color:#000;transform:scaleX(1.0163);">West</span></div>
<div class="c" style="left:1317px;top:657px;width:79px;height:22px"><span class="t" style="left:3.30px;top:4px;font-size:15.5px;line-height:15.5px;color:#000;transform:scaleX(0.9816);">FUR-TA-10001539</span></div>
<div class="c" style="left:1397px;top:657px;width:110px;height:22px"><span class="t" style="left:3.30px;top:4px;font-size:15.5px;line-height:15.5px;color:#000;">Furniture</span></div>
<div class="c" style="left:1508px;top:657px;width:99px;height:22px"><span class="t" style="left:3.30px;top:4px;font-size:15.5px;line-height:15.5px;color:#000;transform:scaleX(0.9797);">Tables</span></div>
<div class="c" style="left:1608px;top:657px;width:109px;height:22px"><span class="t" style="left:3.30px;top:4px;font-size:15.5px;line-height:15.5px;color:#000;transform:scaleX(0.9912);">Chromcraft Rectangular Conference Tables</span></div>
<div class="c" style="left:1718px;top:657px;width:77px;height:22px"><span class="t" style="left:16.80px;top:4px;font-size:15.5px;line-height:15.5px;color:#000;transform:scaleX(1.0298);">1706.18</span></div>
<div class="c" style="left:34px;top:680px;width:54px;height:22px"><span class="t" style="left:34.08px;top:4px;font-size:15.5px;line-height:15.5px;color:#000;transform:scaleX(1.0104);">12</span></div>
<div class="c" style="left:89px;top:680px;width:124px;height:22px"><span class="t" style="left:3.30px;top:4px;font-size:15.5px;line-height:15.5px;color:#000;transform:scaleX(1.0238);">CA-2015-115812</span></div>
<div class="c" style="left:214px;top:680px;width:86px;height:22px"><span class="t" style="left:19.40px;top:4px;font-size:15.5px;line-height:15.5px;color:#000;transform:scaleX(1.0623);">9/6/2015</span></div>
<div class="c" style="left:301px;top:680px;width:86px;height:22px"><span class="t" style="left:3.30px;top:4px;font-size:15.5px;line-height:15.5px;color:#000;transform:scaleX(1.0571);">14/06/2015</span></div>
<div class="c" style="left:388px;top:680px;width:110px;height:22px"><span class="t" style="left:3.30px;top:4px;font-size:15.5px;line-height:15.5px;color:#000;transform:scaleX(0.9785);">Standard Class</span></div>
<div class="c" style="left:499px;top:680px;width:91px;height:22px"><span class="t" style="left:3.30px;top:4px;font-size:15.5px;line-height:15.5px;color:#000;transform:scaleX(1.0211);">BH-11710</span></div>
<div class="c" style="left:591px;top:680px;width:137px;height:22px"><span class="t" style="left:3.30px;top:4px;font-size:15.5px;line-height:15.5px;color:#000;transform:scaleX(0.9960);">Brosina Hoffman</span></div>
<div class="c" style="left:729px;top:680px;width:93px;height:22px"><span class="t" style="left:3.30px;top:4px;font-size:15.5px;line-height:15.5px;color:#000;">Consumer</span></div>
<div class="c" style="left:823px;top:680px;width:97px;height:22px"><span class="t" style="left:3.30px;top:4px;font-size:15.5px;line-height:15.5px;color:#000;transform:scaleX(0.9748);">United States</span></div>
<div class="c" style="left:921px;top:680px;width:146px;height:22px"><span class="t" style="left:3.30px;top:4px;font-size:15.5px;line-height:15.5px;color:#000;transform:scaleX(0.9638);">Los Angeles</span></div>
<div class="c" style="left:1068px;top:680px;width:101px;height:22px"><span class="t" style="left:3.30px;top:4px;font-size:15.5px;line-height:15.5px;color:#000;transform:scaleX(1.0185);">California</span></div>
<div class="c" style="left:1170px;top:680px;width:88px;height:22px"><span class="t" style="left:40.76px;top:4px;font-size:15.5px;line-height:15.5px;color:#000;transform:scaleX(1.0379);">90032</span></div>
<div class="c" style="left:1259px;top:680px;width:57px;height:22px"><span class="t" style="left:3.30px;top:4px;font-size:15.5px;line-height:15.5px;color:#000;transform:scaleX(1.0163);">West</span></div>
<div class="c" style="left:1317px;top:680px;width:79px;height:22px"><span class="t" style="left:3.30px;top:4px;font-size:15.5px;line-height:15.5px;color:#000;transform:scaleX(0.9730);">TEC-PH-10002033</span></div>
<div class="c" style="left:1397px;top:680px;width:110px;height:22px"><span class="t" style="left:3.30px;top:4px;font-size:15.5px;line-height:15.5px;color:#000;">Technology</span></div>
<div class="c" style="left:1508px;top:680px;width:99px;height:22px"><span class="t" style="left:3.30px;top:4px;font-size:15.5px;line-height:15.5px;color:#000;transform:scaleX(0.9852);">Phones</span></div>
<div class="c" style="left:1608px;top:680px;width:109px;height:22px"><span class="t" style="left:3.30px;top:4px;font-size:15.5px;line-height:15.5px;color:#000;transform:scaleX(0.9810);">Konftel 250 Conference phone</span></div>
<div class="c" style="left:1718px;top:680px;width:77px;height:22px"><span class="t" style="left:16.26px;top:4px;font-size:15.5px;line-height:15.5px;color:#000;transform:scaleX(1.0610);">911.424</span></div>
<div class="c" style="left:34px;top:703px;width:54px;height:22px"><span class="t" style="left:34.08px;top:4px;font-size:15.5px;line-height:15.5px;color:#000;transform:scaleX(1.0104);">13</span></div>
<div class="c" style="left:89px;top:703px;width:124px;height:22px"><span class="t" style="left:3.30px;top:4px;font-size:15.5px;line-height:15.5px;color:#000;transform:scaleX(1.0238);">CA-2018-114412</span></div>
<div class="c" style="left:214px;top:703px;width:86px;height:22px"><span class="t" style="left:3.30px;top:4px;font-size:15.5px;line-height:15.5px;color:#000;transform:scaleX(1.0571);">15/04/2018</span></div>
<div class="c" style="left:301px;top:703px;width:86px;height:22px"><span class="t" style="left:3.30px;top:4px;font-size:15.5px;line-height:15.5px;color:#000;transform:scaleX(1.0571);">20/04/2018</span></div>
<div class="c" style="left:388px;top:703px;width:110px;height:22px"><span class="t" style="left:3.30px;top:4px;font-size:15.5px;line-height:15.5px;color:#000;transform:scaleX(0.9785);">Standard Class</span></div>
<div class="c" style="left:499px;top:703px;width:91px;height:22px"><span class="t" style="left:3.30px;top:4px;font-size:15.5px;line-height:15.5px;color:#000;transform:scaleX(1.0048);">AA-10480</span></div>
<div class="c" style="left:591px;top:703px;width:137px;height:22px"><span class="t" style="left:3.30px;top:4px;font-size:15.5px;line-height:15.5px;color:#000;transform:scaleX(0.9738);">Andrew Allen</span></div>
<div class="c" style="left:729px;top:703px;width:93px;height:22px"><span class="t" style="left:3.30px;top:4px;font-size:15.5px;line-height:15.5px;color:#000;">Consumer</span></div>
<div class="c" style="left:823px;top:703px;width:97px;height:22px"><span class="t" style="left:3.30px;top:4px;font-size:15.5px;line-height:15.5px;color:#000;transform:scaleX(0.9748);">United States</span></div>
<div class="c" style="left:921px;top:703px;width:146px;height:22px"><span class="t" style="left:3.30px;top:4px;font-size:15.5px;line-height:15.5px;color:#000;transform:scaleX(1.0189);">Concord</span></div>
<div class="c" style="left:1068px;top:703px;width:101px;height:22px"><span class="t" style="left:3.30px;top:4px;font-size:15.5px;line-height:15.5px;color:#000;transform:scaleX(0.9776);">North Carolina</span></div>
<div class="c" style="left:1170px;top:703px;width:88px;height:22px"><span class="t" style="left:40.76px;top:4px;font-size:15.5px;line-height:15.5px;color:#000;transform:scaleX(1.0379);">28027</span></div>
<div class="c" style="left:1259px;top:703px;width:57px;height:22px"><span class="t" style="left:3.30px;top:4px;font-size:15.5px;line-height:15.5px;color:#000;transform:scaleX(1.0148);">South</span></div>
<div class="c" style="left:1317px;top:703px;width:79px;height:22px"><span class="t" style="left:3.30px;top:4px;font-size:15.5px;line-height:15.5px;color:#000;transform:scaleX(0.9816);">OFF-PA-10002365</span></div>
<div class="c" style="left:1397px;top:703px;width:110px;height:22px"><span class="t" style="left:3.30px;top:4px;font-size:15.5px;line-height:15.5px;color:#000;transform:scaleX(0.9964);">Office Supplies</span></div>
<div class="c" style="left:1508px;top:703px;width:99px;height:22px"><span class="t" style="left:3.30px;top:4px;font-size:15.5px;line-height:15.5px;color:#000;transform:scaleX(0.9576);">Paper</span></div>
<div class="c" style="left:1608px;top:703px;width:109px;height:22px"><span class="t" style="left:3.30px;top:4px;font-size:15.5px;line-height:15.5px;color:#000;transform:scaleX(0.9725);">Xerox 1967</span></div>
<div class="c" style="left:1718px;top:703px;width:77px;height:22px"><span class="t" style="left:25.37px;top:4px;font-size:15.5px;line-height:15.5px;color:#000;transform:scaleX(1.0361);">15.552</span></div>
<div class="c" style="left:34px;top:726px;width:54px;height:22px"><span class="t" style="left:34.08px;top:4px;font-size:15.5px;line-height:15.5px;color:#000;transform:scaleX(1.0104);">14</span></div>
<div class="c" style="left:89px;top:726px;width:124px;height:22px"><span class="t" style="left:3.30px;top:4px;font-size:15.5px;line-height:15.5px;color:#000;transform:scaleX(1.0138);">CA-2017-161389</span></div>
<div class="c" style="left:214px;top:726px;width:86px;height:22px"><span class="t" style="left:10.60px;top:4px;font-size:15.5px;line-height:15.5px;color:#000;transform:scaleX(1.0571);">5/12/2017</span></div>
<div class="c" style="left:301px;top:726px;width:86px;height:22px"><span class="t" style="left:3.30px;top:4px;font-size:15.5px;line-height:15.5px;color:#000;transform:scaleX(0.9198);">##########</span></div>
<div class="c" style="left:388px;top:726px;width:110px;height:22px"><span class="t" style="left:3.30px;top:4px;font-size:15.5px;line-height:15.5px;color:#000;transform:scaleX(0.9785);">Standard Class</span></div>
<div class="c" style="left:499px;top:726px;width:91px;height:22px"><span class="t" style="left:3.30px;top:4px;font-size:15.5px;line-height:15.5px;color:#000;transform:scaleX(1.0055);">IM-15070</span></div>
<div class="c" style="left:591px;top:726px;width:137px;height:22px"><span class="t" style="left:3.30px;top:4px;font-size:15.5px;line-height:15.5px;color:#000;transform:scaleX(0.9643);">Irene Maddox</span></div>
<div class="c" style="left:729px;top:726px;width:93px;height:22px"><span class="t" style="left:3.30px;top:4px;font-size:15.5px;line-height:15.5px;color:#000;">Consumer</span></div>
<div class="c" style="left:823px;top:726px;width:97px;height:22px"><span class="t" style="left:3.30px;top:4px;font-size:15.5px;line-height:15.5px;color:#000;transform:scaleX(0.9748);">United States</span></div>
<div class="c" style="left:921px;top:726px;width:146px;height:22px"><span class="t" style="left:3.30px;top:4px;font-size:15.5px;line-height:15.5px;color:#000;transform:scaleX(0.9761);">Seattle</span></div>
<div class="c" style="left:1068px;top:726px;width:101px;height:22px"><span class="t" style="left:3.30px;top:4px;font-size:15.5px;line-height:15.5px;color:#000;transform:scaleX(1.0174);">Washington</span></div>
<div class="c" style="left:1170px;top:726px;width:88px;height:22px"><span class="t" style="left:40.76px;top:4px;font-size:15.5px;line-height:15.5px;color:#000;transform:scaleX(1.0379);">98103</span></div>
<div class="c" style="left:1259px;top:726px;width:57px;height:22px"><span class="t" style="left:3.30px;top:4px;font-size:15.5px;line-height:15.5px;color:#000;transform:scaleX(1.0163);">West</span></div>
<div class="c" style="left:1317px;top:726px;width:79px;height:22px"><span class="t" style="left:3.30px;top:4px;font-size:15.5px;line-height:15.5px;color:#000;transform:scaleX(0.9735);">OFF-BI-10003656</span></div>
<div class="c" style="left:1397px;top:726px;width:110px;height:22px"><span class="t" style="left:3.30px;top:4px;font-size:15.5px;line-height:15.5px;color:#000;transform:scaleX(0.9964);">Office Supplies</span></div>
<div class="c" style="left:1508px;top:726px;width:99px;height:22px"><span class="t" style="left:3.30px;top:4px;font-size:15.5px;line-height:15.5px;color:#000;transform:scaleX(0.9855);">Binders</span></div>
<div class="c" style="left:1608px;top:726px;width:109px;height:22px"><span class="t" style="left:3.30px;top:4px;font-size:15.5px;line-height:15.5px;color:#000;transform:scaleX(0.9757);">Fellowes PB200 Plastic Comb Binding Machine</span></div>
<div class="c" style="left:1718px;top:726px;width:77px;height:22px"><span class="t" style="left:16.26px;top:4px;font-size:15.5px;line-height:15.5px;color:#000;transform:scaleX(1.0393);">407.976</span></div>
<div class="c" style="left:34px;top:749px;width:54px;height:22px"><span class="t" style="left:34.08px;top:4px;font-size:15.5px;line-height:15.5px;color:#000;transform:scaleX(1.0104);">15</span></div>
<div class="c" style="left:89px;top:749px;width:124px;height:22px"><span class="t" style="left:3.30px;top:4px;font-size:15.5px;line-height:15.5px;color:#000;transform:scaleX(1.0238);">US-2016-118983</span></div>
<div class="c" style="left:214px;top:749px;width:86px;height:22px"><span class="t" style="left:3.30px;top:4px;font-size:15.5px;line-height:15.5px;color:#000;transform:scaleX(1.0730);">22/11/2016</span></div>
<div class="c" style="left:301px;top:749px;width:86px;height:22px"><span class="t" style="left:3.30px;top:4px;font-size:15.5px;line-height:15.5px;color:#000;transform:scaleX(1.0730);">26/11/2016</span></div>
<div class="c" style="left:388px;top:749px;width:110px;height:22px"><span class="t" style="left:3.30px;top:4px;font-size:15.5px;line-height:15.5px;color:#000;transform:scaleX(0.9785);">Standard Class</span></div>
<div class="c" style="left:499px;top:749px;width:91px;height:22px"><span class="t" style="left:3.30px;top:4px;font-size:15.5px;line-height:15.5px;color:#000;transform:scaleX(1.0047);">HP-14815</span></div>
<div class="c" style="left:591px;top:749px;width:137px;height:22px"><span class="t" style="left:3.30px;top:4px;font-size:15.5px;line-height:15.5px;color:#000;transform:scaleX(0.9732);">Harold Pawlan</span></div>
<div class="c" style="left:729px;top:749px;width:93px;height:22px"><span class="t" style="left:3.30px;top:4px;font-size:15.5px;line-height:15.5px;color:#000;transform:scaleX(0.9912);">Home Office</span></div>
<div class="c" style="left:823px;top:749px;width:97px;height:22px"><span class="t" style="left:3.30px;top:4px;font-size:15.5px;line-height:15.5px;color:#000;transform:scaleX(0.9748);">United States</span></div>
<div class="c" style="left:921px;top:749px;width:146px;height:22px"><span class="t" style="left:3.30px;top:4px;font-size:15.5px;line-height:15.5px;color:#000;transform:scaleX(0.9887);">Fort Worth</span></div>
<div class="c" style="left:1068px;top:749px;width:101px;height:22px"><span class="t" style="left:3.30px;top:4px;font-size:15.5px;line-height:15.5px;color:#000;transform:scaleX(0.9312);">Texas</span></div>
<div class="c" style="left:1170px;top:749px;width:88px;height:22px"><span class="t" style="left:40.76px;top:4px;font-size:15.5px;line-height:15.5px;color:#000;transform:scaleX(1.0379);">76106</span></div>
<div class="c" style="left:1259px;top:749px;width:57px;height:22px"><span class="t" style="left:3.30px;top:4px;font-size:15.5px;line-height:15.5px;color:#000;transform:scaleX(1.0126);">Central</span></div>
<div class="c" style="left:1317px;top:749px;width:79px;height:22px"><span class="t" style="left:3.30px;top:4px;font-size:15.5px;line-height:15.5px;color:#000;transform:scaleX(0.9816);">OFF-AP-10002311</span></div>
<div class="c" style="left:1397px;top:749px;width:110px;height:22px"><span class="t" style="left:3.30px;top:4px;font-size:15.5px;line-height:15.5px;color:#000;transform:scaleX(0.9964);">Office Supplies</span></div>
<div class="c" style="left:1508px;top:749px;width:99px;height:22px"><span class="t" style="left:3.30px;top:4px;font-size:15.5px;line-height:15.5px;color:#000;">Appliances</span></div>
<div class="c" style="left:1608px;top:749px;width:109px;height:22px"><span class="t" style="left:3.30px;top:4px;font-size:15.5px;line-height:15.5px;color:#000;transform:scaleX(0.9810);">Holmes Replacement Filter</span></div>
<div class="c" style="left:1718px;top:749px;width:77px;height:22px"><span class="t" style="left:34.48px;top:4px;font-size:15.5px;line-height:15.5px;color:#000;transform:scaleX(1.0320);">68.81</span></div>
<div class="c" style="left:34px;top:772px;width:54px;height:22px"><span class="t" style="left:34.08px;top:4px;font-size:15.5px;line-height:15.5px;color:#000;transform:scaleX(1.0104);">16</span></div>
<div class="c" style="left:89px;top:772px;width:124px;height:22px"><span class="t" style="left:3.30px;top:4px;font-size:15.5px;line-height:15.5px;color:#000;transform:scaleX(1.0238);">US-2016-118983</span></div>
<div class="c" style="left:214px;top:772px;width:86px;height:22px"><span class="t" style="left:3.30px;top:4px;font-size:15.5px;line-height:15.5px;color:#000;transform:scaleX(1.0730);">22/11/2016</span></div>
<div class="c" style="left:301px;top:772px;width:86px;height:22px"><span class="t" style="left:3.30px;top:4px;font-size:15.5px;line-height:15.5px;color:#000;transform:scaleX(1.0730);">26/11/2016</span></div>
<div class="c" style="left:388px;top:772px;width:110px;height:22px"><span class="t" style="left:3.30px;top:4px;font-size:15.5px;line-height:15.5px;color:#000;transform:scaleX(0.9785);">Standard Class</span></div>
<div class="c" style="left:499px;top:772px;width:91px;height:22px"><span class="t" style="left:3.30px;top:4px;font-size:15.5px;line-height:15.5px;color:#000;transform:scaleX(1.0047);">HP-14815</span></div>
<div class="c" style="left:591px;top:772px;width:137px;height:22px"><span class="t" style="left:3.30px;top:4px;font-size:15.5px;line-height:15.5px;color:#000;transform:scaleX(0.9732);">Harold Pawlan</span></div>
<div class="c" style="left:729px;top:772px;width:93px;height:22px"><span class="t" style="left:3.30px;top:4px;font-size:15.5px;line-height:15.5px;color:#000;transform:scaleX(0.9912);">Home Office</span></div>
<div class="c" style="left:823px;top:772px;width:97px;height:22px"><span class="t" style="left:3.30px;top:4px;font-size:15.5px;line-height:15.5px;color:#000;transform:scaleX(0.9748);">United States</span></div>
<div class="c" style="left:921px;top:772px;width:146px;height:22px"><span class="t" style="left:3.30px;top:4px;font-size:15.5px;line-height:15.5px;color:#000;transform:scaleX(0.9887);">Fort Worth</span></div>
<div class="c" style="left:1068px;top:772px;width:101px;height:22px"><span class="t" style="left:3.30px;top:4px;font-size:15.5px;line-height:15.5px;color:#000;transform:scaleX(0.9312);">Texas</span></div>
<div class="c" style="left:1170px;top:772px;width:88px;height:22px"><span class="t" style="left:40.76px;top:4px;font-size:15.5px;line-height:15.5px;color:#000;transform:scaleX(1.0379);">76106</span></div>
<div class="c" style="left:1259px;top:772px;width:57px;height:22px"><span class="t" style="left:3.30px;top:4px;font-size:15.5px;line-height:15.5px;color:#000;transform:scaleX(1.0126);">Central</span></div>
<div class="c" style="left:1317px;top:772px;width:79px;height:22px"><span class="t" style="left:3.30px;top:4px;font-size:15.5px;line-height:15.5px;color:#000;transform:scaleX(0.9735);">OFF-BI-10000756</span></div>
<div class="c" style="left:1397px;top:772px;width:110px;height:22px"><span class="t" style="left:3.30px;top:4px;font-size:15.5px;line-height:15.5px;color:#000;transform:scaleX(0.9964);">Office Supplies</span></div>
<div class="c" style="left:1508px;top:772px;width:99px;height:22px"><span class="t" style="left:3.30px;top:4px;font-size:15.5px;line-height:15.5px;color:#000;transform:scaleX(0.9855);">Binders</span></div>
<div class="c" style="left:1608px;top:772px;width:109px;height:22px"><span class="t" style="left:3.30px;top:4px;font-size:15.5px;line-height:15.5px;color:#000;transform:scaleX(0.9837);">Storex DuraTech Recycled Plastic</span></div>
<div class="c" style="left:1718px;top:772px;width:77px;height:22px"><span class="t" style="left:34.48px;top:4px;font-size:15.5px;line-height:15.5px;color:#000;transform:scaleX(1.0320);">2.544</span></div>
<div class="c" style="left:34px;top:795px;width:54px;height:22px"><span class="t" style="left:34.08px;top:4px;font-size:15.5px;line-height:15.5px;color:#000;transform:scaleX(1.0104);">17</span></div>
<div class="c" style="left:89px;top:795px;width:124px;height:22px"><span class="t" style="left:3.30px;top:4px;font-size:15.5px;line-height:15.5px;color:#000;transform:scaleX(1.0138);">CA-2015-105893</span></div>
<div class="c" style="left:214px;top:795px;width:86px;height:22px"><span class="t" style="left:3.30px;top:4px;font-size:15.5px;line-height:15.5px;color:#000;transform:scaleX(0.9198);">##########</span></div>
<div class="c" style="left:301px;top:795px;width:86px;height:22px"><span class="t" style="left:3.30px;top:4px;font-size:15.5px;line-height:15.5px;color:#000;transform:scaleX(1.0730);">18/11/2015</span></div>
<div class="c" style="left:388px;top:795px;width:110px;height:22px"><span class="t" style="left:3.30px;top:4px;font-size:15.5px;line-height:15.5px;color:#000;transform:scaleX(0.9785);">Standard Class</span></div>
<div class="c" style="left:499px;top:795px;width:91px;height:22px"><span class="t" style="left:3.30px;top:4px;font-size:15.5px;line-height:15.5px;color:#000;transform:scaleX(1.0048);">PK-19075</span></div>
<div class="c" style="left:591px;top:795px;width:137px;height:22px"><span class="t" style="left:3.30px;top:4px;font-size:15.5px;line-height:15.5px;color:#000;transform:scaleX(0.9128);">Pete Kriz</span></div>
<div class="c" style="left:729px;top:795px;width:93px;height:22px"><span class="t" style="left:3.30px;top:4px;font-size:15.5px;line-height:15.5px;color:#000;">Consumer</span></div>
<div class="c" style="left:823px;top:795px;width:97px;height:22px"><span class="t" style="left:3.30px;top:4px;font-size:15.5px;line-height:15.5px;color:#000;transform:scaleX(0.9748);">United States</span></div>
<div class="c" style="left:921px;top:795px;width:146px;height:22px"><span class="t" style="left:3.30px;top:4px;font-size:15.5px;line-height:15.5px;color:#000;">Madison</span></div>
<div class="c" style="left:1068px;top:795px;width:101px;height:22px"><span class="t" style="left:3.30px;top:4px;font-size:15.5px;line-height:15.5px;color:#000;transform:scaleX(1.0293);">Wisconsin</span></div>
<div class="c" style="left:1170px;top:795px;width:88px;height:22px"><span class="t" style="left:40.76px;top:4px;font-size:15.5px;line-height:15.5px;color:#000;transform:scaleX(1.0663);">53711</span></div>
<div class="c" style="left:1259px;top:795px;width:57px;height:22px"><span class="t" style="left:3.30px;top:4px;font-size:15.5px;line-height:15.5px;color:#000;transform:scaleX(1.0126);">Central</span></div>
<div class="c" style="left:1317px;top:795px;width:79px;height:22px"><span class="t" style="left:3.30px;top:4px;font-size:15.5px;line-height:15.5px;color:#000;transform:scaleX(0.9796);">OFF-ST-10004186</span></div>
<div class="c" style="left:1397px;top:795px;width:110px;height:22px"><span class="t" style="left:3.30px;top:4px;font-size:15.5px;line-height:15.5px;color:#000;transform:scaleX(0.9964);">Office Supplies</span></div>
<div class="c" style="left:1508px;top:795px;width:99px;height:22px"><span class="t" style="left:3.30px;top:4px;font-size:15.5px;line-height:15.5px;color:#000;transform:scaleX(0.9617);">Storage</span></div>
<div class="c" style="left:1608px;top:795px;width:109px;height:22px"><span class="t" style="left:3.30px;top:4px;font-size:15.5px;line-height:15.5px;color:#000;transform:scaleX(0.9682);">Stur-D-Stor Shelving</span></div>
<div class="c" style="left:1718px;top:795px;width:77px;height:22px"><span class="t" style="left:25.37px;top:4px;font-size:15.5px;line-height:15.5px;color:#000;transform:scaleX(1.0361);">665.88</span></div>
<div class="c" style="left:34px;top:818px;width:54px;height:22px"><span class="t" style="left:34.08px;top:4px;font-size:15.5px;line-height:15.5px;color:#000;transform:scaleX(1.0104);">18</span></div>
<div class="c" style="left:89px;top:818px;width:124px;height:22px"><span class="t" style="left:3.30px;top:4px;font-size:15.5px;line-height:15.5px;color:#000;transform:scaleX(1.0138);">CA-2015-167164</span></div>
<div class="c" style="left:214px;top:818px;width:86px;height:22px"><span class="t" style="left:3.30px;top:4px;font-size:15.5px;line-height:15.5px;color:#000;transform:scaleX(1.0571);">13/05/2015</span></div>
<div class="c" style="left:301px;top:818px;width:86px;height:22px"><span class="t" style="left:3.30px;top:4px;font-size:15.5px;line-height:15.5px;color:#000;transform:scaleX(1.0571);">15/05/2015</span></div>
<div class="c" style="left:388px;top:818px;width:110px;height:22px"><span class="t" style="left:3.30px;top:4px;font-size:15.5px;line-height:15.5px;color:#000;transform:scaleX(0.9798);">Second Class</span></div>
<div class="c" style="left:499px;top:818px;width:91px;height:22px"><span class="t" style="left:3.30px;top:4px;font-size:15.5px;line-height:15.5px;color:#000;transform:scaleX(1.0044);">AG-10270</span></div>
<div class="c" style="left:591px;top:818px;width:137px;height:22px"><span class="t" style="left:3.30px;top:4px;font-size:15.5px;line-height:15.5px;color:#000;transform:scaleX(0.9652);">Alejandro Grove</span></div>
<div class="c" style="left:729px;top:818px;width:93px;height:22px"><span class="t" style="left:3.30px;top:4px;font-size:15.5px;line-height:15.5px;color:#000;">Consumer</span></div>
<div class="c" style="left:823px;top:818px;width:97px;height:22px"><span class="t" style="left:3.30px;top:4px;font-size:15.5px;line-height:15.5px;color:#000;transform:scaleX(0.9748);">United States</span></div>
<div class="c" style="left:921px;top:818px;width:146px;height:22px"><span class="t" style="left:3.30px;top:4px;font-size:15.5px;line-height:15.5px;color:#000;transform:scaleX(0.9582);">West Jordan</span></div>
<div class="c" style="left:1068px;top:818px;width:101px;height:22px"><span class="t" style="left:3.30px;top:4px;font-size:15.5px;line-height:15.5px;color:#000;">Utah</span></div>
<div class="c" style="left:1170px;top:818px;width:88px;height:22px"><span class="t" style="left:40.76px;top:4px;font-size:15.5px;line-height:15.5px;color:#000;transform:scaleX(1.0379);">84084</span></div>
<div class="c" style="left:1259px;top:818px;width:57px;height:22px"><span class="t" style="left:3.30px;top:4px;font-size:15.5px;line-height:15.5px;color:#000;transform:scaleX(1.0163);">West</span></div>
<div class="c" style="left:1317px;top:818px;width:79px;height:22px"><span class="t" style="left:3.30px;top:4px;font-size:15.5px;line-height:15.5px;color:#000;transform:scaleX(0.9796);">OFF-ST-10000107</span></div>
<div class="c" style="left:1397px;top:818px;width:110px;height:22px"><span class="t" style="left:3.30px;top:4px;font-size:15.5px;line-height:15.5px;color:#000;transform:scaleX(0.9964);">Office Supplies</span></div>
<div class="c" style="left:1508px;top:818px;width:99px;height:22px"><span class="t" style="left:3.30px;top:4px;font-size:15.5px;line-height:15.5px;color:#000;transform:scaleX(0.9617);">Storage</span></div>
<div class="c" style="left:1608px;top:818px;width:109px;height:22px"><span class="t" style="left:3.30px;top:4px;font-size:15.5px;line-height:15.5px;color:#000;transform:scaleX(0.9843);">Fellowes Super Stor/Drawer</span></div>
<div class="c" style="left:1718px;top:818px;width:77px;height:22px"><span class="t" style="left:43.59px;top:4px;font-size:15.5px;line-height:15.5px;color:#000;transform:scaleX(1.0248);">55.5</span></div>
<div class="c" style="left:34px;top:841px;width:54px;height:22px"><span class="t" style="left:34.08px;top:4px;font-size:15.5px;line-height:15.5px;color:#000;transform:scaleX(1.0104);">19</span></div>
<div class="c" style="left:89px;top:841px;width:124px;height:22px"><span class="t" style="left:3.30px;top:4px;font-size:15.5px;line-height:15.5px;color:#000;transform:scaleX(1.0138);">CA-2015-143336</span></div>
<div class="c" style="left:214px;top:841px;width:86px;height:22px"><span class="t" style="left:3.30px;top:4px;font-size:15.5px;line-height:15.5px;color:#000;transform:scaleX(1.0571);">27/08/2015</span></div>
<div class="c" style="left:301px;top:841px;width:86px;height:22px"><span class="t" style="left:19.71px;top:4px;font-size:15.5px;line-height:15.5px;color:#000;transform:scaleX(1.0572);">1/9/2015</span></div>
<div class="c" style="left:388px;top:841px;width:110px;height:22px"><span class="t" style="left:3.30px;top:4px;font-size:15.5px;line-height:15.5px;color:#000;transform:scaleX(0.9798);">Second Class</span></div>
<div class="c" style="left:499px;top:841px;width:91px;height:22px"><span class="t" style="left:3.30px;top:4px;font-size:15.5px;line-height:15.5px;color:#000;transform:scaleX(1.0048);">ZD-21925</span></div>
<div class="c" style="left:591px;top:841px;width:137px;height:22px"><span class="t" style="left:3.30px;top:4px;font-size:15.5px;line-height:15.5px;color:#000;transform:scaleX(1.0088);">Zuschuss Donatelli</span></div>
<div class="c" style="left:729px;top:841px;width:93px;height:22px"><span class="t" style="left:3.30px;top:4px;font-size:15.5px;line-height:15.5px;color:#000;">Consumer</span></div>
<div class="c" style="left:823px;top:841px;width:97px;height:22px"><span class="t" style="left:3.30px;top:4px;font-size:15.5px;line-height:15.5px;color:#000;transform:scaleX(0.9748);">United States</span></div>
<div class="c" style="left:921px;top:841px;width:146px;height:22px"><span class="t" style="left:3.30px;top:4px;font-size:15.5px;line-height:15.5px;color:#000;transform:scaleX(0.9659);">San Francisco</span></div>
<div class="c" style="left:1068px;top:841px;width:101px;height:22px"><span class="t" style="left:3.30px;top:4px;font-size:15.5px;line-height:15.5px;color:#000;transform:scaleX(1.0185);">California</span></div>
<div class="c" style="left:1170px;top:841px;width:88px;height:22px"><span class="t" style="left:40.76px;top:4px;font-size:15.5px;line-height:15.5px;color:#000;transform:scaleX(1.0379);">94109</span></div>
<div class="c" style="left:1259px;top:841px;width:57px;height:22px"><span class="t" style="left:3.30px;top:4px;font-size:15.5px;line-height:15.5px;color:#000;transform:scaleX(1.0163);">West</span></div>
<div class="c" style="left:1317px;top:841px;width:79px;height:22px"><span class="t" style="left:3.30px;top:4px;font-size:15.5px;line-height:15.5px;color:#000;transform:scaleX(0.9729);">OFF-AR-10003056</span></div>
<div class="c" style="left:1397px;top:841px;width:110px;height:22px"><span class="t" style="left:3.30px;top:4px;font-size:15.5px;line-height:15.5px;color:#000;transform:scaleX(0.9964);">Office Supplies</span></div>
<div class="c" style="left:1508px;top:841px;width:99px;height:22px"><span class="t" style="left:3.30px;top:4px;font-size:15.5px;line-height:15.5px;color:#000;">Art</span></div>
<div class="c" style="left:1608px;top:841px;width:109px;height:22px"><span class="t" style="left:3.30px;top:4px;font-size:15.5px;line-height:15.5px;color:#000;transform:scaleX(0.9860);">Newell 341</span></div>
<div class="c" style="left:1718px;top:841px;width:77px;height:22px"><span class="t" style="left:43.59px;top:4px;font-size:15.5px;line-height:15.5px;color:#000;transform:scaleX(1.0248);">8.56</span></div>
<div class="c" style="left:34px;top:864px;width:54px;height:22px"><span class="t" style="left:34.08px;top:4px;font-size:15.5px;line-height:15.5px;color:#000;transform:scaleX(1.0104);">20</span></div>
<div class="c" style="left:89px;top:864px;width:124px;height:22px"><span class="t" style="left:3.30px;top:4px;font-size:15.5px;line-height:15.5px;color:#000;transform:scaleX(1.0138);">CA-2015-143336</span></div>
<div class="c" style="left:214px;top:864px;width:86px;height:22px"><span class="t" style="left:3.30px;top:4px;font-size:15.5px;line-height:15.5px;color:#000;transform:scaleX(1.0571);">27/08/2015</span></div>
<div class="c" style="left:301px;top:864px;width:86px;height:22px"><span class="t" style="left:19.71px;top:4px;font-size:15.5px;line-height:15.5px;color:#000;transform:scaleX(1.0572);">1/9/2015</span></div>
<div class="c" style="left:388px;top:864px;width:110px;height:22px"><span class="t" style="left:3.30px;top:4px;font-size:15.5px;line-height:15.5px;color:#000;transform:scaleX(0.9798);">Second Class</span></div>
<div class="c" style="left:499px;top:864px;width:91px;height:22px"><span class="t" style="left:3.30px;top:4px;font-size:15.5px;line-height:15.5px;color:#000;transform:scaleX(1.0048);">ZD-21925</span></div>
<div class="c" style="left:591px;top:864px;width:137px;height:22px"><span class="t" style="left:3.30px;top:4px;font-size:15.5px;line-height:15.5px;color:#000;transform:scaleX(1.0088);">Zuschuss Donatelli</span></div>
<div class="c" style="left:729px;top:864px;width:93px;height:22px"><span class="t" style="left:3.30px;top:4px;font-size:15.5px;line-height:15.5px;color:#000;">Consumer</span></div>
<div class="c" style="left:823px;top:864px;width:97px;height:22px"><span class="t" style="left:3.30px;top:4px;font-size:15.5px;line-height:15.5px;color:#000;transform:scaleX(0.9748);">United States</span></div>
<div class="c" style="left:921px;top:864px;width:146px;height:22px"><span class="t" style="left:3.30px;top:4px;font-size:15.5px;line-height:15.5px;color:#000;transform:scaleX(0.9659);">San Francisco</span></div>
<div class="c" style="left:1068px;top:864px;width:101px;height:22px"><span class="t" style="left:3.30px;top:4px;font-size:15.5px;line-height:15.5px;color:#000;transform:scaleX(1.0185);">California</span></div>
<div class="c" style="left:1170px;top:864px;width:88px;height:22px"><span class="t" style="left:40.76px;top:4px;font-size:15.5px;line-height:15.5px;color:#000;transform:scaleX(1.0379);">94109</span></div>
<div class="c" style="left:1259px;top:864px;width:57px;height:22px"><span class="t" style="left:3.30px;top:4px;font-size:15.5px;line-height:15.5px;color:#000;transform:scaleX(1.0163);">West</span></div>
<div class="c" style="left:1317px;top:864px;width:79px;height:22px"><span class="t" style="left:3.30px;top:4px;font-size:15.5px;line-height:15.5px;color:#000;transform:scaleX(0.9730);">TEC-PH-10001949</span></div>
<div class="c" style="left:1397px;top:864px;width:110px;height:22px"><span class="t" style="left:3.30px;top:4px;font-size:15.5px;line-height:15.5px;color:#000;">Technology</span></div>
<div class="c" style="left:1508px;top:864px;width:99px;height:22px"><span class="t" style="left:3.30px;top:4px;font-size:15.5px;line-height:15.5px;color:#000;transform:scaleX(0.9852);">Phones</span></div>
<div class="c" style="left:1608px;top:864px;width:109px;height:22px"><span class="t" style="left:3.30px;top:4px;font-size:15.5px;line-height:15.5px;color:#000;transform:scaleX(0.9716);">Cisco SPA 501G IP Phone</span></div>
<div class="c" style="left:1718px;top:864px;width:77px;height:22px"><span class="t" style="left:25.37px;top:4px;font-size:15.5px;line-height:15.5px;color:#000;transform:scaleX(1.0361);">213.48</span></div>
<div class="c" style="left:34px;top:887px;width:54px;height:22px"><span class="t" style="left:34.08px;top:4px;font-size:15.5px;line-height:15.5px;color:#000;transform:scaleX(1.0104);">21</span></div>
<div class="c" style="left:89px;top:887px;width:124px;height:22px"><span class="t" style="left:3.30px;top:4px;font-size:15.5px;line-height:15.5px;color:#000;transform:scaleX(1.0138);">CA-2015-143336</span></div>
<div class="c" style="left:214px;top:887px;width:86px;height:22px"><span class="t" style="left:3.30px;top:4px;font-size:15.5px;line-height:15.5px;color:#000;transform:scaleX(1.0571);">27/08/2015</span></div>
<div class="c" style="left:301px;top:887px;width:86px;height:22px"><span class="t" style="left:19.71px;top:4px;font-size:15.5px;line-height:15.5px;color:#000;transform:scaleX(1.0572);">1/9/2015</span></div>
<div class="c" style="left:388px;top:887px;width:110px;height:22px"><span class="t" style="left:3.30px;top:4px;font-size:15.5px;line-height:15.5px;color:#000;transform:scaleX(0.9798);">Second Class</span></div>
<div class="c" style="left:499px;top:887px;width:91px;height:22px"><span class="t" style="left:3.30px;top:4px;font-size:15.5px;line-height:15.5px;color:#000;transform:scaleX(1.0048);">ZD-21925</span></div>
<div class="c" style="left:591px;top:887px;width:137px;height:22px"><span class="t" style="left:3.30px;top:4px;font-size:15.5px;line-height:15.5px;color:#000;transform:scaleX(1.0088);">Zuschuss Donatelli</span></div>
<div class="c" style="left:729px;top:887px;width:93px;height:22px"><span class="t" style="left:3.30px;top:4px;font-size:15.5px;line-height:15.5px;color:#000;">Consumer</span></div>
<div class="c" style="left:823px;top:887px;width:97px;height:22px"><span class="t" style="left:3.30px;top:4px;font-size:15.5px;line-height:15.5px;color:#000;transform:scaleX(0.9748);">United States</span></div>
<div class="c" style="left:921px;top:887px;width:146px;height:22px"><span class="t" style="left:3.30px;top:4px;font-size:15.5px;line-height:15.5px;color:#000;transform:scaleX(0.9659);">San Francisco</span></div>
<div class="c" style="left:1068px;top:887px;width:101px;height:22px"><span class="t" style="left:3.30px;top:4px;font-size:15.5px;line-height:15.5px;color:#000;transform:scaleX(1.0185);">California</span></div>
<div class="c" style="left:1170px;top:887px;width:88px;height:22px"><span class="t" style="left:40.76px;top:4px;font-size:15.5px;line-height:15.5px;color:#000;transform:scaleX(1.0379);">94109</span></div>
<div class="c" style="left:1259px;top:887px;width:57px;height:22px"><span class="t" style="left:3.30px;top:4px;font-size:15.5px;line-height:15.5px;color:#000;transform:scaleX(1.0163);">West</span></div>
<div class="c" style="left:1317px;top:887px;width:79px;height:22px"><span class="t" style="left:3.30px;top:4px;font-size:15.5px;line-height:15.5px;color:#000;transform:scaleX(0.9735);">OFF-BI-10002215</span></div>
<div class="c" style="left:1397px;top:887px;width:110px;height:22px"><span class="t" style="left:3.30px;top:4px;font-size:15.5px;line-height:15.5px;color:#000;transform:scaleX(0.9964);">Office Supplies</span></div>
<div class="c" style="left:1508px;top:887px;width:99px;height:22px"><span class="t" style="left:3.30px;top:4px;font-size:15.5px;line-height:15.5px;color:#000;transform:scaleX(0.9855);">Binders</span></div>
<div class="c" style="left:1608px;top:887px;width:109px;height:22px"><span class="t" style="left:3.30px;top:4px;font-size:15.5px;line-height:15.5px;color:#000;transform:scaleX(0.9698);">Wilson Jones Hanging View Binder</span></div>
<div class="c" style="left:1718px;top:887px;width:77px;height:22px"><span class="t" style="left:34.48px;top:4px;font-size:15.5px;line-height:15.5px;color:#000;transform:scaleX(1.0320);">22.72</span></div>
<div class="c" style="left:34px;top:910px;width:54px;height:22px"><span class="t" style="left:34.08px;top:4px;font-size:15.5px;line-height:15.5px;color:#000;transform:scaleX(1.0104);">22</span></div>
<div class="c" style="left:89px;top:910px;width:124px;height:22px"><span class="t" style="left:3.30px;top:4px;font-size:15.5px;line-height:15.5px;color:#000;transform:scaleX(1.0138);">CA-2017-137330</span></div>
<div class="c" style="left:214px;top:910px;width:86px;height:22px"><span class="t" style="left:10.60px;top:4px;font-size:15.5px;line-height:15.5px;color:#000;transform:scaleX(1.0571);">9/12/2017</span></div>
<div class="c" style="left:301px;top:910px;width:86px;height:22px"><span class="t" style="left:3.30px;top:4px;font-size:15.5px;line-height:15.5px;color:#000;transform:scaleX(1.0571);">13/12/2017</span></div>
<div class="c" style="left:388px;top:910px;width:110px;height:22px"><span class="t" style="left:3.30px;top:4px;font-size:15.5px;line-height:15.5px;color:#000;transform:scaleX(0.9785);">Standard Class</span></div>
<div class="c" style="left:499px;top:910px;width:91px;height:22px"><span class="t" style="left:3.30px;top:4px;font-size:15.5px;line-height:15.5px;color:#000;transform:scaleX(1.0048);">KB-16585</span></div>
<div class="c" style="left:591px;top:910px;width:137px;height:22px"><span class="t" style="left:3.30px;top:4px;font-size:15.5px;line-height:15.5px;color:#000;transform:scaleX(0.9511);">Ken Black</span></div>
<div class="c" style="left:729px;top:910px;width:93px;height:22px"><span class="t" style="left:3.30px;top:4px;font-size:15.5px;line-height:15.5px;color:#000;">Corporate</span></div>
<div class="c" style="left:823px;top:910px;width:97px;height:22px"><span class="t" style="left:3.30px;top:4px;font-size:15.5px;line-height:15.5px;color:#000;transform:scaleX(0.9748);">United States</span></div>
<div class="c" style="left:921px;top:910px;width:146px;height:22px"><span class="t" style="left:3.30px;top:4px;font-size:15.5px;line-height:15.5px;color:#000;transform:scaleX(0.9947);">Fremont</span></div>
<div class="c" style="left:1068px;top:910px;width:101px;height:22px"><span class="t" style="left:3.30px;top:4px;font-size:15.5px;line-height:15.5px;color:#000;transform:scaleX(0.9811);">Nebraska</span></div>
<div class="c" style="left:1170px;top:910px;width:88px;height:22px"><span class="t" style="left:40.76px;top:4px;font-size:15.5px;line-height:15.5px;color:#000;transform:scaleX(1.0379);">68025</span></div>
<div class="c" style="left:1259px;top:910px;width:57px;height:22px"><span class="t" style="left:3.30px;top:4px;font-size:15.5px;line-height:15.5px;color:#000;transform:scaleX(1.0126);">Central</span></div>
<div class="c" style="left:1317px;top:910px;width:79px;height:22px"><span class="t" style="left:3.30px;top:4px;font-size:15.5px;line-height:15.5px;color:#000;transform:scaleX(0.9729);">OFF-AR-10000246</span></div>
<div class="c" style="left:1397px;top:910px;width:110px;height:22px"><span class="t" style="left:3.30px;top:4px;font-size:15.5px;line-height:15.5px;color:#000;transform:scaleX(0.9964);">Office Supplies</span></div>
<div class="c" style="left:1508px;top:910px;width:99px;height:22px"><span class="t" style="left:3.30px;top:4px;font-size:15.5px;line-height:15.5px;color:#000;">Art</span></div>
<div class="c" style="left:1608px;top:910px;width:109px;height:22px"><span class="t" style="left:3.30px;top:4px;font-size:15.5px;line-height:15.5px;color:#000;transform:scaleX(0.9860);">Newell 318</span></div>
<div class="c" style="left:1718px;top:910px;width:77px;height:22px"><span class="t" style="left:34.48px;top:4px;font-size:15.5px;line-height:15.5px;color:#000;transform:scaleX(1.0320);">19.46</span></div>
<div class="b" style="left:32px;top:402px;width:58px;height:26px;border:2px solid #107c41;"></div>
<div class="b" style="left:85px;top:423px;width:7px;height:7px;background:#107c41;border:1px solid #fff;"></div>
<div class="b" style="left:1894px;top:381px;width:26px;height:559px;background:#1f1917;"></div>
<div class="b" style="left:1897px;top:382px;width:21px;height:558px;background:#161616;border-radius:10px;"></div>
<svg class="b" style="left:1901px;top:386px;" width="13" height="11" viewBox="0 0 13 11"><path d="M6.500 1.500L12 9.500H1z" fill="#9b9b9b" stroke="#9b9b9b" stroke-width="1" stroke-linejoin="round"/></svg>
<div class="b" style="left:1902px;top:402px;width:11px;height:21px;background:#9b9b9b;border-radius:6px;"></div>
<svg class="b" style="left:1901px;top:925px;" width="13" height="11" viewBox="0 0 13 11"><path d="M6.500 9.500L12 1.500H1z" fill="#9b9b9b" stroke="#9b9b9b" stroke-width="1" stroke-linejoin="round"/></svg>
<div class="b" style="left:0px;top:937px;width:1920px;height:41px;background:linear-gradient(90deg,#1a1a1a 0%,#1c1b1a 50%,#1e1a19 100%);"></div>
<div class="b" style="left:0px;top:977px;width:1920px;height:1px;background:#3c3c3c;"></div>
<svg class="b" style="left:30px;top:948px;" width="12" height="16" viewBox="0 0 12 16"><path d="M9.500 1.500L2.500 8l7 6.500" fill="none" stroke="#8a8a8a" stroke-width="1.500"/></svg>
<svg class="b" style="left:70px;top:948px;" width="12" height="16" viewBox="0 0 12 16"><path d="M2.500 1.500L9.500 8l-7 6.500" fill="none" stroke="#8a8a8a" stroke-width="1.500"/></svg>
<div class="b" style="left:136px;top:937px;width:226px;height:5px;background:#ffffff;"></div>
<div class="b" style="left:126px;top:937px;width:15px;height:12px;background:#1a1a1a;border-radius:0 5px 0 0;"></div>
<div class="b" style="left:357px;top:937px;width:15px;height:12px;background:#1b1b1a;border-radius:5px 0 0 0;"></div>
<div class="b" style="left:141px;top:937px;width:216px;height:35px;background:#ffffff;border-radius:0 0 5px 5px;"></div>
<span class="t" style="left:151.25px;top:945px;font-size:18.8px;line-height:18.8px;color:#1e1e1e;transform:scaleX(0.9138);">Superstore Sales Dataset</span>
<div class="b" style="left:151px;top:967.2px;width:196px;height:1.9px;background:#107c41;"></div>
<div class="b" style="left:362px;top:945px;width:1px;height:23px;background:#8a8a8a;"></div>
<svg class="b" style="left:414px;top:948px;" width="17" height="17" viewBox="0 0 17 17"><path d="M8.500 1.500v14M1.500 8.500h14" stroke="#e8e8e8" stroke-width="1.600"/></svg>
<div class="b" style="left:1154.5px;top:951px;width:2.5px;height:2.5px;background:#e0e0e0;"></div>
<div class="b" style="left:1154.5px;top:956px;width:2.5px;height:2.5px;background:#e0e0e0;"></div>
<div class="b" style="left:1154.5px;top:961px;width:2.5px;height:2.5px;background:#e0e0e0;"></div>
<div class="b" style="left:1176px;top:947px;width:721px;height:20px;background:#131313;border-radius:10px;"></div>
<svg class="b" style="left:1181px;top:951px;" width="11" height="12" viewBox="0 0 11 12"><path d="M9 1.500v9L1.500 6z" fill="#9b9b9b"/></svg>
<div class="b" style="left:1197px;top:951.5px;width:659px;height:10.5px;background:#9b9b9b;border-radius:5.5px;"></div>
<svg class="b" style="left:1881px;top:951px;" width="11" height="12" viewBox="0 0 11 12"><path d="M2 1.500v9L9.500 6z" fill="#9b9b9b"/></svg>
<div class="b" style="left:0px;top:978px;width:1920px;height:42px;background:#141414;"></div>
<span class="t" style="left:15.90px;top:992px;font-size:19.6px;line-height:19.6px;color:#fff;transform:scaleX(0.9371);">Ready</span>
<svg class="b" style="left:96px;top:983px;" width="33" height="32" viewBox="96 983 33 32"><circle cx="110.800" cy="989.200" r="3.800" fill="#151515" stroke="#fff" stroke-width="2.200"/>
<path d="M100.500 989.800Q105.500 993 110.800 993.200Q116.500 993 121.500 989.800Q124.500 990.200 123.300 993.200L115.200 997.200V1003L117.800 1011.200Q116.800 1013.600 114.300 1012.300L110.800 1004.800L105.800 1012.300Q103.300 1013.600 102.300 1011.200L106.600 1002.500V997.200L99 993.500Q97.600 990.600 100.500 989.800Z" fill="#151515" stroke="#fff" stroke-width="2.100" stroke-linejoin="round"/>
<circle cx="110.800" cy="989.200" r="3.800" fill="#151515" stroke="#fff" stroke-width="2.200"/>
<path d="M118.300 1001.200c0-2.400 1.900-3.600 4-3.600 2.200 0 3.900 1.300 3.900 3.400 0 2.600-3.800 3-3.800 6.200" fill="none" stroke="#fff" stroke-width="2.300"/><rect x="121.100" y="1010.300" width="2.500" height="2.500" fill="#fff"/></svg>
<span class="t" style="left:132.50px;top:992px;font-size:19.6px;line-height:19.6px;color:#fff;transform:scaleX(0.9827);">Accessibility: Unavailable</span>
<div class="b" style="left:1405px;top:978px;width:62px;height:42px;background:#262626;"></div>
<svg class="b" style="left:1421px;top:984px;" width="28" height="28" viewBox="0 0 28 28"><rect x="1.900" y="1.800" width="24.200" height="24.300" fill="none" stroke="#fff" stroke-width="2"/><path d="M10 1.800v24.300M18 1.800v24.300M1.900 10h24.200M1.900 18h24.200" stroke="#fff" stroke-width="2"/></svg>
<svg class="b" style="left:1483px;top:984px;" width="30" height="28" viewBox="0 0 30 28"><rect x="1.900" y="1.800" width="26.300" height="24.300" fill="none" stroke="#fff" stroke-width="2"/><rect x="7.800" y="6" width="14.500" height="16.200" fill="none" stroke="#fff" stroke-width="2"/><path d="M10.800 10.200h8.400M10.800 14.100h8.400M10.800 18h8.400" stroke="#fff" stroke-width="1.800"/></svg>
<svg class="b" style="left:1545px;top:984px;" width="30" height="28" viewBox="0 0 30 28"><rect x="1.800" y="1.800" width="26.400" height="24.300" fill="none" stroke="#fff" stroke-width="2"/><path d="M10 1.800v15.200M18 1.800v15.200M1.800 16h17.200" fill="none" stroke="#fff" stroke-width="2"/></svg>
<div class="b" style="left:1598.5px;top:998.3px;width:14.5px;height:1.5px;background:#d0d0d0;"></div>
<div class="b" style="left:1620px;top:998.5px;width:201px;height:1px;background:#a0a0a0;"></div>
<div class="b" style="left:1720.5px;top:994.5px;width:1px;height:9px;background:#a0a0a0;"></div>
<div class="b" style="left:1710px;top:988.5px;width:9px;height:21px;background:#b4b4b4;"></div>
<svg class="b" style="left:1827px;top:991px;" width="16" height="16" viewBox="0 0 16 16"><path d="M8 .5v15M.5 8h15" stroke="#d8d8d8" stroke-width="1.400"/></svg>
<span class="t" style="left:1859.60px;top:991px;font-size:20.5px;line-height:20.5px;color:#fff;transform:scaleX(0.8935);">94%</span>
<div class="b" style="left:0px;top:1020px;width:1920px;height:60px;background:linear-gradient(90deg,#8a3867 0%,#8f3868 25%,#96345f 45%,#8d3462 62%,#93396a 80%,#963a68 100%);"></div>
<div class="b" style="left:0px;top:1020px;width:1920px;height:1px;background:rgba(255,255,255,0.07);"></div>
<svg class="b" style="left:830px;top:1005px;" width="260" height="60" viewBox="0 0 260 60"><g fill="none" stroke="rgba(255,255,255,0.21)" stroke-width="6.700">
<path d="M18.300 21.700V42q0 6.700 6.700 6.700H236"/>
<path d="M68.400 22v23.500M110.400 22v23.500M130.700 22v23.500M150.300 22v23.500"/>
<path d="M77.300 15v30.500"/>
<path d="M167.500 15Q157 31 166.500 45.500"/><path d="M176 24.500q11-1 16.500 9.500"/>
<path d="M208.500 30.500q14-17 29.500 0"/></g>
<path d="M73.950 15v-3.500l6.700-4.700V15z" fill="rgba(255,255,255,0.36)"/>
<g fill="rgba(255,255,255,0.36)"><path d="M35.900 7.300l6.200 6.200-6.200 6.200-6.200-6.200zM51.200 7.300l6.200 6.200-6.200 6.200-6.200-6.200zM222 6.700l6.200 6.200-6.200 6.200-6.200-6.200z"/><rect x="159.800" y="7.400" width="12.800" height="6.200"/><rect x="176" y="7.400" width="13.600" height="6.200"/></g></svg>
<svg class="b" style="left:27px;top:1036px;" width="26" height="26" viewBox="0 0 26 26"><defs><clipPath id="sn"><circle cx="12.750" cy="13.100" r="11.900"/></clipPath></defs><circle cx="12.750" cy="13.100" r="11.900" fill="#e8921c"/>
<g clip-path="url(#sn)"><path d="M10 26L26 10V26z" fill="#f0381a" opacity=".55"/><path d="M0 0H12L0 12z" fill="#ffe23a" opacity=".4"/></g></svg>
<div class="b" style="left:39px;top:1027.6px;width:20px;height:20px;background:#f99aa8;border-radius:10px;"></div>
<span class="t" style="left:45.30px;top:1032px;font-size:13.8px;line-height:13.8px;color:#000;transform:scaleX(0.7690);">5</span>
<span class="t" style="left:65.00px;top:1032px;font-size:16px;line-height:16px;color:#fff;transform:scaleX(0.8393);">32°C</span>
<svg class="b" style="left:63px;top:1053px;" width="50" height="18" viewBox="63 1053 50 18"><g fill="none" stroke="#ead7e2" stroke-width="1.350" stroke-linecap="round" stroke-linejoin="round">
<path d="M65.500 1061Q65 1068.500 69 1068.500Q72.500 1068.500 72.200 1061.500"/><path d="M72.200 1061V1064.300H76V1061.300M76 1064.300H79.800V1061.300M79.800 1064.300H85.900"/>
<path d="M85.900 1064.300Q86 1059.800 89 1059.800Q91.800 1060 91.600 1064.300H85.900M91.600 1064.300H94V1061M94 1064.300H97.600V1061M97.600 1064.300H101.500V1060.500M101.500 1064.300H104.800"/>
<path d="M104.800 1064.300Q105 1060 107.800 1060Q110.300 1060.300 110 1064.300H104.800"/></g>
<g fill="#ead7e2"><circle cx="96" cy="1057.300" r=".85"/><circle cx="98.400" cy="1057.300" r=".85"/><circle cx="97.200" cy="1055.500" r=".85"/></g></svg>
<svg class="b" style="left:503px;top:1036px;" width="29" height="29" viewBox="0 0 29 29"><defs><linearGradient id="wg" x1="0" y1="0" x2="1" y2="1"><stop offset="0" stop-color="#6fd2ff"/><stop offset="1" stop-color="#1fa4ee"/></linearGradient></defs>
<rect x="0" y="0" width="14" height="14" rx="1" fill="url(#wg)"/><rect x="15" y="0" width="14" height="14" rx="1" fill="url(#wg)"/><rect x="0" y="15" width="14" height="14" rx="1" fill="url(#wg)"/><rect x="15" y="15" width="14" height="14" rx="1" fill="url(#wg)"/></svg>
<div class="b" style="left:548px;top:1030px;width:275px;height:40px;background:#a24f7b;border:1px solid #ad5f88;border-radius:20px;"></div>
<svg class="b" style="left:561px;top:1038px;" width="22" height="23" viewBox="0 0 22 23"><circle cx="9.500" cy="10" r="7" fill="none" stroke="#f1dde7" stroke-width="2"/><path d="M14.500 15.500l5 5.500" stroke="#f1dde7" stroke-width="2.400" stroke-linecap="round"/></svg>
<span class="t" style="left:594.60px;top:1040px;font-size:21.8px;line-height:21.8px;color:#ecd5e1;transform:scaleX(0.9896);">Search web...</span>
<svg class="b" style="left:753px;top:1034px;" width="67" height="34" viewBox="0 0 67 34"><defs><clipPath id="hc"><path d="M15 1H50a16 16 0 0 1 0 32H17L1 23V10z"/></clipPath></defs>
<g clip-path="url(#hc)"><rect width="67" height="34" fill="#8b8890"/><rect x="26" y="0" width="41" height="10" fill="#7f86a3"/><rect x="40" y="3" width="27" height="5" fill="#9a8a93"/>
<path d="M0 19l12-3 14 18H0z" fill="#dc9a33"/><path d="M30 34l6-9 18 4 4 5z" fill="#e0a443"/>
<path d="M4 15c10-3 18 2 24 8s14 9 26 9" fill="none" stroke="#efefef" stroke-width="5"/><path d="M22 7c10-1 16 4 22 9s12 7 23 6" fill="none" stroke="#e4e4e6" stroke-width="4"/>
<path d="M2 12l16-9" stroke="#6d6a72" stroke-width="3"/></g></svg>
<div class="b" style="left:839.5px;top:1046px;width:22px;height:18px;background:#5c5c60;border-radius:2px;"></div>
<div class="b" style="left:847px;top:1036px;width:22px;height:20px;background:#e4e1e3;border-radius:2px;opacity:.92"></div>
<svg class="b" style="left:894px;top:1036px;" width="31" height="28" viewBox="0 0 31 28"><path d="M1 4a2 2 0 0 1 2-2h8l3 3h14a2 2 0 0 1 2 2v18a2 2 0 0 1-2 2H3a2 2 0 0 1-2-2z" fill="#f6c443"/><path d="M1 3.500a2 2 0 0 1 2-2h7v4H1z" fill="#ee9f2a"/>
<rect x="5.500" y="18" width="20" height="8" rx="2" fill="#1d7fd8"/><rect x="10" y="21" width="11" height="1.500" fill="#0c4f9c"/></svg>
<div class="b" style="left:905px;top:1071px;width:8px;height:3px;background:#d8a8c0;border-radius:2px;"></div>
<svg class="b" style="left:948px;top:1035px;" width="32" height="31" viewBox="0 0 32 31"><defs><linearGradient id="eg" x1="0" y1="0" x2="1" y2="1"><stop offset="0" stop-color="#35c1f1"/><stop offset=".5" stop-color="#2a9fd8"/><stop offset="1" stop-color="#0d5fb8"/></linearGradient></defs>
<circle cx="16.500" cy="15" r="14.500" fill="url(#eg)"/><path d="M17 .5a14.500 14.500 0 0 1 14 14c0 4-3 6.500-7 6.500-3 0-5-1.500-5-3.500 2-1.500 2-5-1-7-3-2-8-1-11 2C8 5 12 .5 17 .5z" fill="#57c878" opacity=".85"/>
<circle cx="18" cy="15.500" r="5.500" fill="#8d3462"/><circle cx="8.500" cy="22.500" r="8" fill="#9a8378"/><circle cx="6" cy="20" r="2" fill="#e7b3cf"/><circle cx="11" cy="25" r="2" fill="#c9661e"/></svg>
<div class="b" style="left:960px;top:1071px;width:8px;height:3px;background:#d8a8c0;border-radius:2px;"></div>
<svg class="b" style="left:1004px;top:1034px;" width="30" height="32" viewBox="0 0 30 32"><path d="M9 8V4.500a2 2 0 0 1 2-2h8a2 2 0 0 1 2 2V8" fill="none" stroke="#2a9be8" stroke-width="2.200"/>
<path d="M.5 7.500h29V26a5 5 0 0 1-5 5h-19a5 5 0 0 1-5-5z" fill="#f1f1f3"/><rect x="9" y="12.500" width="5.500" height="5.500" fill="#e8703a"/><rect x="15.500" y="12.500" width="5.500" height="5.500" fill="#6fb544"/><rect x="9" y="19" width="5.500" height="5.500" fill="#2a9be8"/><rect x="15.500" y="19" width="5.500" height="5.500" fill="#f2b431"/></svg>
<svg class="b" style="left:1059px;top:1034px;" width="31" height="31" viewBox="0 0 31 31"><rect x="12" y="0" width="7" height="31" rx="2" fill="#8e8e94" transform="rotate(0 15.500 15.500)"/><rect x="12" y="0" width="7" height="31" rx="2" fill="#8e8e94" transform="rotate(45 15.500 15.500)"/><rect x="12" y="0" width="7" height="31" rx="2" fill="#8e8e94" transform="rotate(90 15.500 15.500)"/><rect x="12" y="0" width="7" height="31" rx="2" fill="#8e8e94" transform="rotate(135 15.500 15.500)"/><circle cx="15.500" cy="15.500" r="11.500" fill="#8e8e94"/><circle cx="15.500" cy="15.500" r="6.500" fill="#e8e8ee"/><circle cx="15.500" cy="15.500" r="5" fill="#1e78d2"/><path d="M15.500 10.500a5 5 0 0 0 0 10z" fill="#0c58a8"/></svg>
<svg class="b" style="left:1113px;top:1034px;" width="32" height="32" viewBox="0 0 32 32"><path d="M16.500 2a14 14 0 0 0-12 21L2 30.500l7.800-2.300A14 14 0 1 0 16.500 2z" fill="none" stroke="#2bb461" stroke-width="2.600" stroke-linejoin="round"/>
<path d="M11.500 9.500c-1 0-2.500 1.500-2.500 3.500 0 3 4.500 9 10 10 2 .3 4-1 4.300-2.500l-3.300-2-1.700 1.500c-2-.8-4.500-3.200-5.300-5.300l1.500-1.700z" fill="#2bb461"/></svg>
<svg class="b" style="left:1168px;top:1036px;" width="32" height="28" viewBox="0 0 32 28"><circle cx="18" cy="5.500" r="4.500" fill="#5a73d6"/><circle cx="27" cy="7" r="3.200" fill="#4f67cc"/><rect x="12" y="11" width="13" height="15" rx="4" fill="#6b84e4"/><rect x="22" y="12" width="9" height="11" rx="3.500" fill="#4f67cc"/>
<rect x="0" y="6" width="15" height="15" rx="2" fill="#3d54b8"/><path d="M3.500 9.500h8v2h-3v7h-2v-7h-3z" fill="#fff"/></svg>
<svg class="b" style="left:1223px;top:1036px;" width="32" height="28" viewBox="0 0 32 28"><path d="M7 8L19 1l12 7v15a3 3 0 0 1-3 3H10a3 3 0 0 1-3-3z" fill="#2ea5e8"/><path d="M19 1l12 7-12 8z" fill="#1565c0"/><path d="M7 12l24 12v-1.500a3 3 0 0 1-3 3.500H10z" fill="#36b6f2"/>
<rect x="0" y="7" width="16" height="16" rx="2" fill="#0f6cbd"/><circle cx="8" cy="15" r="4.200" fill="none" stroke="#fff" stroke-width="2.200"/></svg>
<svg class="b" style="left:1279px;top:1035px;" width="30" height="30" viewBox="0 0 24 24"><path d="M22.2819 9.8211a5.9847 5.9847 0 0 0-.5157-4.9108 6.0462 6.0462 0 0 0-6.5098-2.9A6.0651 6.0651 0 0 0 4.9807 4.1818a5.9847 5.9847 0 0 0-3.9977 2.9 6.0462 6.0462 0 0 0 .7427 7.0966 5.98 5.98 0 0 0 .511 4.9107 6.051 6.051 0 0 0 6.5146 2.9001A5.9847 5.9847 0 0 0 13.2599 24a6.0557 6.0557 0 0 0 5.7718-4.2058 5.9894 5.9894 0 0 0 3.9977-2.9001 6.0557 6.0557 0 0 0-.7475-7.0729zm-9.022 12.6081a4.4755 4.4755 0 0 1-2.8764-1.0408l.1419-.0804 4.7783-2.7582a.7948.7948 0 0 0 .3927-.6813v-6.7369l2.02 1.1686a.071.071 0 0 1 .038.052v5.5826a4.504 4.504 0 0 1-4.4945 4.4944zm-9.6607-4.1254a4.4708 4.4708 0 0 1-.5346-3.0137l.142.0852 4.783 2.7582a.7712.7712 0 0 0 .7806 0l5.8428-3.3685v2.3324a.0804.0804 0 0 1-.0332.0615L9.74 19.9502a4.4992 4.4992 0 0 1-6.1408-1.6464zM2.3408 7.8956a4.485 4.485 0 0 1 2.3655-1.9728V11.6a.7664.7664 0 0 0 .3879.6765l5.8144 3.3543-2.0201 1.1685a.0757.0757 0 0 1-.071 0l-4.8303-2.7865A4.504 4.504 0 0 1 2.3408 7.872zm16.5963 3.8558L13.1038 8.364 15.1192 7.2a.0757.0757 0 0 1 .071 0l4.8303 2.7913a4.4944 4.4944 0 0 1-.6765 8.1042v-5.6772a.79.79 0 0 0-.407-.667zm2.0107-3.0231l-.142-.0852-4.7735-2.7818a.7759.7759 0 0 0-.7854 0L9.409 9.2297V6.8974a.0662.0662 0 0 1 .0284-.0615l4.8303-2.7866a4.4992 4.4992 0 0 1 6.6802 4.66zM8.3065 12.863l-2.02-1.1638a.0804.0804 0 0 1-.038-.0567V6.0742a4.4992 4.4992 0 0 1 7.3757-3.4537l-.142.0805L8.704 5.459a.7948.7948 0 0 0-.3927.6813zm1.0976-2.3654l2.602-1.4998 2.6069 1.4998v2.9994l-2.5974 1.4997-2.6067-1.4997Z" fill="#fff"/></svg>
<div class="b" style="left:1290px;top:1071px;width:8px;height:3px;background:#d8a8c0;border-radius:2px;"></div>
<svg class="b" style="left:1335px;top:1036px;" width="28" height="28" viewBox="0 0 28 28"><rect x="0" y="0" width="27" height="27" rx="4" fill="#3e66c4"/><path d="M0 19L13 8l14 13v2a4 4 0 0 1-4 4H4a4 4 0 0 1-4-4z" fill="#3aa0e8"/><path d="M8 27L20 14.500l7 6.500v2a4 4 0 0 1-4 4z" fill="#1f78d0"/><circle cx="20" cy="5.500" r="2.500" fill="#f0f0f0"/></svg>
<div class="b" style="left:1345px;top:1071px;width:8px;height:3px;background:#d8a8c0;border-radius:2px;"></div>
<div class="b" style="left:1379px;top:1025px;width:50px;height:50px;background:rgba(255,255,255,0.075);border:1px solid rgba(255,255,255,0.06);border-radius:6px;"></div>
<svg class="b" style="left:1389px;top:1036px;" width="30" height="28" viewBox="0 0 30 28"><defs><clipPath id="xt"><rect x="7" y="0" width="22" height="27.500" rx="1.500"/></clipPath></defs>
<g clip-path="url(#xt)"><rect x="7" y="0" width="22" height="28" fill="#2f9f5b"/><rect x="7" y="0" width="11" height="6.800" fill="#33a85f"/><rect x="18" y="0" width="11" height="6.800" fill="#52c586"/>
<rect x="7" y="6.800" width="22" height="7.200" fill="#33a85f"/><rect x="7" y="14" width="22" height="7" fill="#1a7f45"/><rect x="7" y="21" width="22" height="7" fill="#13663a"/>
<rect x="17.800" y="6.200" width="1.800" height="15" fill="#0f4d2b" opacity=".7"/></g>
<rect x="0" y="6.200" width="17.800" height="15" rx="1.500" fill="#157b3e"/>
<path d="M4 9.600h2.200l1.300 2.600 1.400-2.600H11l-2.300 3.900 2.400 4.000H8.900l-1.400-2.700-1.500 2.700H3.900l2.400-4.000z" fill="#fff"/></svg>
<div class="b" style="left:1394px;top:1070.2px;width:19.8px;height:3.5px;background:#e9b6c9;border-radius:2px;"></div>
<svg class="b" style="left:1601px;top:1044px;" width="16" height="11" viewBox="0 0 16 11"><path d="M1.500 9L8 2.500 14.500 9" fill="none" stroke="#fff" stroke-width="1.800" stroke-linecap="round" stroke-linejoin="round"/></svg>
<svg class="b" style="left:1638px;top:1042px;" width="22" height="15" viewBox="0 0 22 15"><path d="M5.500 14a4.500 4.500 0 0 1-.5-9 6 6 0 0 1 11-1.500 4 4 0 0 1 1.500 7.700c-1 .5-1.500 .8-3 .8z" fill="#f3e6ee"/><path d="M3 9c4-3 9-1 14.500 4.500" stroke="#c9a2b8" stroke-width="1" fill="none"/></svg>
<span class="t" style="left:1682.80px;top:1043px;font-size:15.6px;line-height:15.6px;color:#fff;transform:scaleX(0.8342);">ENG</span>
<svg class="b" style="left:1733px;top:1041px;" width="22" height="17" viewBox="0 0 22 17"><path d="M1.500 6.500a14 14 0 0 1 19 0M4.500 9.800a9.500 9.500 0 0 1 13 0M7.700 13a5 5 0 0 1 6.600 0" fill="none" stroke="#fff" stroke-width="1.600" stroke-linecap="round"/><circle cx="11" cy="15" r="1.300" fill="#fff"/></svg>
<svg class="b" style="left:1763px;top:1041px;" width="22" height="18" viewBox="0 0 22 18"><path d="M1.500 6.500h3.500l4.500-4v13l-4.500-4H1.500z" fill="none" stroke="#fff" stroke-width="1.400" stroke-linejoin="round"/><path d="M12.500 6a4 4 0 0 1 0 6M15 3.500a7.500 7.500 0 0 1 0 11M17.500 1.500a10.500 10.500 0 0 1 0 15" fill="none" stroke="#fff" stroke-width="1.400" stroke-linecap="round"/></svg>
<svg class="b" style="left:1793px;top:1042px;" width="22" height="15" viewBox="0 0 22 15"><rect x="1" y="1.500" width="17.500" height="11.500" rx="3" fill="none" stroke="#fff" stroke-width="1.500"/><rect x="3.500" y="4" width="5.500" height="6.500" rx="1" fill="#fff"/><path d="M20 5.500v3.500" stroke="#fff" stroke-width="2" stroke-linecap="round"/></svg>
<span class="t" style="left:1842.20px;top:1032px;font-size:15.6px;line-height:15.6px;color:#fff;transform:scaleX(0.9192);">4:12 PM</span>
<span class="t" style="left:1835.25px;top:1052px;font-size:15.6px;line-height:15.6px;color:#fff;transform:scaleX(0.9937);">9/8/2025</span>
</body></html>
